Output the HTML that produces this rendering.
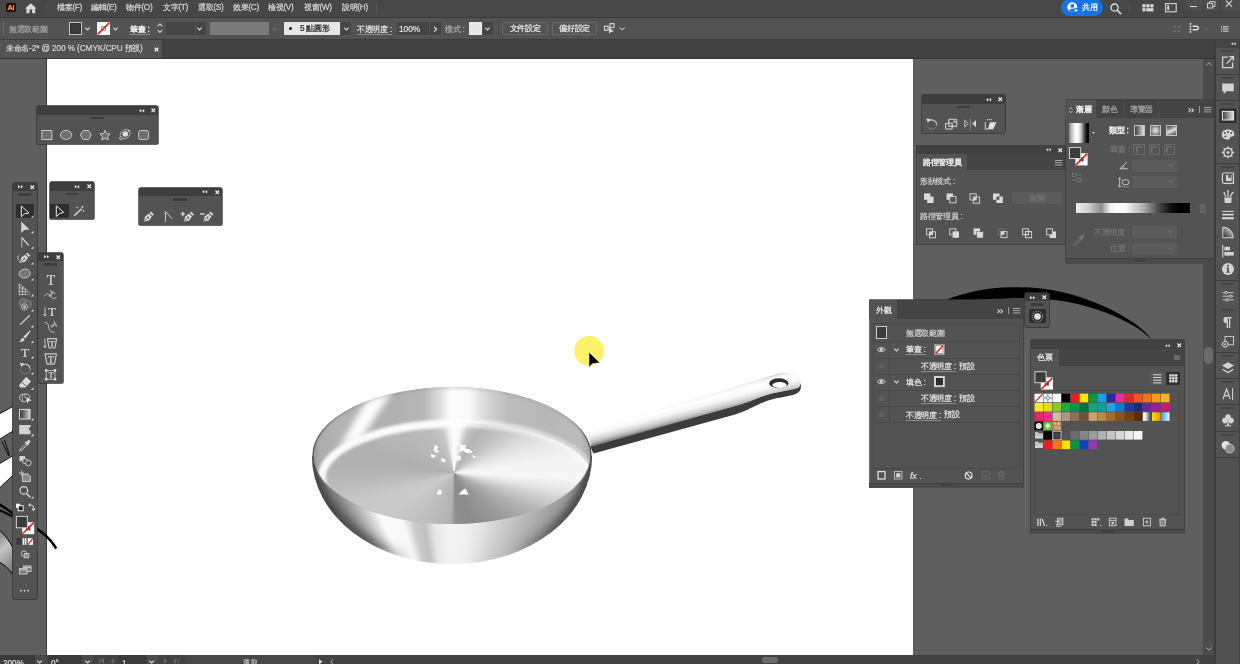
<!DOCTYPE html>
<html lang="zh-Hant"><head><meta charset="utf-8"><title>Adobe Illustrator</title>
<style>
html,body{margin:0;padding:0;}
body{width:1240px;height:664px;overflow:hidden;position:relative;background:#535353;font-family:"Liberation Sans",sans-serif;}
#root{position:absolute;left:0;top:0;width:1240px;height:664px;overflow:hidden;filter:blur(0.32px);}
.a{position:absolute;display:block;}
.t{white-space:nowrap;-webkit-text-stroke:0.22px currentColor;will-change:transform;}
.l{font-size:1.07em;letter-spacing:-0.28px;}
.c{display:inline-block;width:1em;text-align:center;}
svg{overflow:visible;}
</style></head><body><div id="root">
<!-- p_canvas -->
<div class="a" style="left:0px;top:58.4px;width:1203px;height:596.4px;background:#5f5f5f;"></div>
<div class="a" style="left:47.4px;top:58.4px;width:866px;height:596.4px;background:#ffffff;"></div>
<div class="a" style="left:45.6px;top:58.4px;width:1.9px;height:596.4px;background:#3c3c3c;"></div>
<div class="a" style="left:1202.6px;top:58.4px;width:13px;height:596.4px;background:#4c4c4c;"></div>
<svg class="a" style="left:1206px;top:62.4px;" width="6" height="4" viewBox="0 0 6 4"><path d="M0.4 3.2 L3 0.7 L5.6 3.2" fill="none" stroke="#b4b4b4" stroke-width="1"/></svg>
<svg class="a" style="left:1206px;top:647px;" width="6" height="4" viewBox="0 0 6 4"><path d="M0.4 0.7 L3 3.2 L5.6 0.7" fill="none" stroke="#b4b4b4" stroke-width="1"/></svg>
<div class="a" style="left:1204.2px;top:347.4px;width:8.8px;height:16.2px;background:#6b6b6b;border-radius:4.4px;"></div>
<div class="a" style="left:0px;top:654.6px;width:1216px;height:9.4px;background:#424242;"></div>
<!-- p_pan -->
<svg class="a" style="left:0px;top:0px;" width="1240" height="664" viewBox="0 0 1240 664"><path d="M946 300 C962 293 985 288.5 1003 287.6 C1026 286.4 1046 288 1064 292.6 C1092 299.6 1116 311 1134 323 C1143 329.4 1148.6 335 1152 340.5 C1146 334 1140 329.6 1133 325.6 C1117 316 1096 308 1072 302.8 C1052 298.8 1030 298 1008 298.4 C990 298.8 976 299.6 968 300.2 Z" fill="#000"/></svg>
<svg class="a" style="left:0px;top:0px;" width="1240" height="664" viewBox="0 0 1240 664"><defs>
<linearGradient id="gBowl" gradientUnits="userSpaceOnUse" x1="312" y1="0" x2="592" y2="0">
<stop offset="0" stop-color="#5a5a5a"/><stop offset="0.03" stop-color="#747474"/><stop offset="0.09" stop-color="#9a9a9a"/><stop offset="0.16" stop-color="#cdcdcd"/>
<stop offset="0.215" stop-color="#f6f6f6"/><stop offset="0.29" stop-color="#f2f2f2"/><stop offset="0.34" stop-color="#c9c9c9"/><stop offset="0.40" stop-color="#b6b6b6"/>
<stop offset="0.45" stop-color="#cfcfcf"/><stop offset="0.50" stop-color="#f0f0f0"/><stop offset="0.585" stop-color="#f2f2f2"/><stop offset="0.66" stop-color="#dadada"/>
<stop offset="0.75" stop-color="#bebebe"/><stop offset="0.84" stop-color="#a2a2a2"/><stop offset="0.92" stop-color="#858585"/><stop offset="0.975" stop-color="#666"/><stop offset="1" stop-color="#4c4c4c"/>
</linearGradient>
<linearGradient id="gWall" gradientUnits="userSpaceOnUse" x1="312" y1="0" x2="592" y2="0">
<stop offset="0" stop-color="#c2c2c2"/><stop offset="0.05" stop-color="#d6d6d6"/><stop offset="0.085" stop-color="#b0b0b0"/><stop offset="0.125" stop-color="#a6a6a6"/>
<stop offset="0.165" stop-color="#c8c8c8"/><stop offset="0.205" stop-color="#fbfbfb"/><stop offset="0.245" stop-color="#f4f4f4"/><stop offset="0.285" stop-color="#bcbcbc"/>
<stop offset="0.36" stop-color="#adadad"/><stop offset="0.45" stop-color="#b6b6b6"/><stop offset="0.485" stop-color="#e6e6e6"/><stop offset="0.505" stop-color="#ffffff"/>
<stop offset="0.535" stop-color="#f4f4f4"/><stop offset="0.57" stop-color="#c0c0c0"/><stop offset="0.68" stop-color="#bcbcbc"/><stop offset="0.8" stop-color="#c8c8c8"/>
<stop offset="0.92" stop-color="#d8d8d8"/><stop offset="1" stop-color="#dedede"/>
</linearGradient>
<linearGradient id="gHandle" gradientUnits="userSpaceOnUse" x1="686" y1="398" x2="691.4" y2="418.4">
<stop offset="0" stop-color="#b8b8b8"/><stop offset="0.1" stop-color="#f2f2f2"/><stop offset="0.3" stop-color="#ffffff"/><stop offset="0.55" stop-color="#f6f6f6"/>
<stop offset="0.8" stop-color="#d2d2d2"/><stop offset="0.95" stop-color="#a8a8a8"/><stop offset="1" stop-color="#8a8a8a"/>
</linearGradient>
<linearGradient id="gRimL" gradientUnits="userSpaceOnUse" x1="312" y1="0" x2="592" y2="0">
<stop offset="0" stop-color="#4a4a4a" stop-opacity="0.85"/><stop offset="0.12" stop-color="#6a6a6a" stop-opacity="0.35"/><stop offset="0.3" stop-color="#fff" stop-opacity="0"/>
<stop offset="0.8" stop-color="#fff" stop-opacity="0"/><stop offset="0.93" stop-color="#6a6a6a" stop-opacity="0.35"/><stop offset="1" stop-color="#3c3c3c" stop-opacity="0.9"/>
</linearGradient>
<clipPath id="cRim"><ellipse cx="452" cy="455.6" rx="139.4" ry="68.6"/></clipPath>
</defs><path d="M590 446 L738 405 C752 401 758 397.4 768 394.6 C780 391.2 792 390.4 798.6 387.6 C800.4 385.4 800.8 383.4 800.6 382 L801 386.6 C801 390.4 799 392.8 795.2 394.2 C786 397.2 776 397.6 768 400.6 C756 404.8 748 410.6 736 414.2 L593.4 453.6 Z" fill="#3c3c3c"/><path d="M583.6 431.4 L779.6 373.6 C786 371.8 794 372.6 798 376 C801.6 379.2 801.6 384.4 798.2 387.2 C793 390.2 780 391.2 768 394.6 C757 397.8 751.6 401.6 740 404.8 L591.6 446.6 C590.6 441.6 587.6 435.6 583.6 431.4 Z" fill="url(#gHandle)"/><ellipse cx="778.8" cy="383.2" rx="9.6" ry="5" fill="#303030"/><ellipse cx="779.6" cy="385" rx="7.2" ry="3" fill="#ffffff"/></svg>
<div class="a" style="left:312.4px;top:456px;width:279.2px;height:108.4px;overflow:hidden;border-radius:0 0 139.6px 139.6px / 0 0 108.4px 108.4px;"><div class="a" style="left:0;top:0;width:279.2px;height:108.4px;background:conic-gradient(from -45deg at 137.6px 216px,#474747 0deg,#5a5a5a 7deg,#828282 12deg,#c0c0c0 16.6deg,#fafafa 20.9deg,#f8f8f8 27.8deg,#cbcbcb 31.4deg,#c0c0c0 35.2deg,#e6e6e6 39.1deg,#f4f4f4 45deg,#f0f0f0 52deg,#e2e2e2 58deg,#cfcfcf 64deg,#b4b4b4 72.3deg,#989898 79.6deg,#727272 84.6deg,#505050 87.4deg,#444 90deg,#444 360deg);"></div><svg class="a" style="left:0;top:0" width="279.2" height="108.4" viewBox="312.4 456 279.2 108.4"><defs><filter id="fBe" x="-10%%" y="-20%%" width="120%%" height="140%%"><feGaussianBlur stdDeviation="4"/></filter><linearGradient id="gBe" gradientUnits="userSpaceOnUse" x1="312" y1="0" x2="592" y2="0"><stop offset="0" stop-color="#3c3c3c" stop-opacity="0.95"/><stop offset="0.2" stop-color="#444" stop-opacity="0.75"/><stop offset="0.36" stop-color="#555" stop-opacity="0"/><stop offset="0.72" stop-color="#555" stop-opacity="0"/><stop offset="0.86" stop-color="#444" stop-opacity="0.7"/><stop offset="1" stop-color="#333" stop-opacity="0.95"/></linearGradient></defs><path d="M310 436 L312.4 456 A139.6 108.4 0 0 0 591.6 456 L594 436" fill="none" stroke="url(#gBe)" stroke-width="12" filter="url(#fBe)"/></svg></div>
<div class="a" style="left:312.6px;top:387px;width:278.8px;height:137.2px;background:#c0c0c0;border-radius:50%;overflow:hidden;"><div class="a" style="left:-18.6px;top:16.8px;width:320px;height:320px;background:conic-gradient(from 0deg,#fdfdfd 0deg,#f4f4f4 3.5deg,#c2c2c2 8deg,#b4b4b4 14deg,#c2c2c2 26deg,#d8d8d8 40deg,#e9e9e9 56deg,#f4f4f4 74deg,#f6f6f6 96deg,#e6e6e6 110deg,#cacaca 125deg,#b0b0b0 140deg,#989898 158deg,#8b8b8b 172deg,#8e8e8e 179deg,#b4b4b4 182deg,#bebebe 195deg,#cacaca 215deg,#c8c8c8 235deg,#bcbcbc 255deg,#b2b2b2 275deg,#b0b0b0 300deg,#b6b6b6 325deg,#bababa 345deg,#c6c6c6 353deg,#f2f2f2 357.5deg,#fdfdfd 360deg);transform-origin:0 0;transform:scaleY(0.4300);"></div></div>
<svg class="a" style="left:0px;top:0px;" width="1240" height="664" viewBox="0 0 1240 664"><defs><mask id="mWall" maskUnits="userSpaceOnUse" x="300" y="380" width="300" height="150"><rect x="300" y="380" width="300" height="150" fill="#fff"/><ellipse cx="457" cy="477.4" rx="135" ry="54.4" fill="#000"/></mask><filter id="fB2" x="-20%" y="-20%" width="140%" height="140%"><feGaussianBlur stdDeviation="1.6"/></filter><filter id="fB3" x="-30%" y="-30%" width="160%" height="160%"><feGaussianBlur stdDeviation="3"/></filter><linearGradient id="gWall2" gradientUnits="userSpaceOnUse" x1="312" y1="0" x2="592" y2="0"><stop offset="0" stop-color="#989898"/><stop offset="0.03" stop-color="#acacac"/><stop offset="0.1" stop-color="#b4b4b4"/><stop offset="0.3" stop-color="#b0b0b0"/><stop offset="0.4" stop-color="#b8b8b8"/><stop offset="0.455" stop-color="#dcdcdc"/><stop offset="0.495" stop-color="#fcfcfc"/><stop offset="0.56" stop-color="#fafafa"/><stop offset="0.62" stop-color="#d8d8d8"/><stop offset="0.7" stop-color="#bcbcbc"/><stop offset="0.85" stop-color="#b8b8b8"/><stop offset="0.96" stop-color="#bcbcbc"/><stop offset="1" stop-color="#a0a0a0"/></linearGradient><linearGradient id="gBand" gradientUnits="userSpaceOnUse" x1="318" y1="0" x2="592" y2="0"><stop offset="0" stop-color="#fff" stop-opacity="0.95"/><stop offset="0.45" stop-color="#fff" stop-opacity="0.95"/><stop offset="0.62" stop-color="#fff" stop-opacity="0.6"/><stop offset="1" stop-color="#fff" stop-opacity="0.4"/></linearGradient><linearGradient id="gWallV" gradientUnits="userSpaceOnUse" x1="0" y1="387" x2="0" y2="420"><stop offset="0" stop-color="#808080" stop-opacity="0.45"/><stop offset="0.12" stop-color="#909090" stop-opacity="0.12"/><stop offset="0.3" stop-color="#909090" stop-opacity="0"/></linearGradient></defs><g mask="url(#mWall)"><g clip-path="url(#cRim)"><ellipse cx="452" cy="455.6" rx="139.4" ry="68.6" fill="url(#gWall2)"/><path d="M372 390 L392 392 L360 440 L340 446 Z" fill="#ffffff" opacity="0.97" filter="url(#fB3)"/><ellipse cx="452" cy="455.6" rx="139" ry="68.2" fill="none" stroke="#8c8c8c" stroke-width="1.6" opacity="0.5" filter="url(#fB2)"/></g></g></svg>
<svg class="a" style="left:0px;top:0px;" width="1240" height="664" viewBox="0 0 1240 664"><defs><linearGradient id="gArc" gradientUnits="userSpaceOnUse" x1="320" y1="0" x2="590" y2="0"><stop offset="0" stop-color="#fff" stop-opacity="0.1"/><stop offset="0.08" stop-color="#fff" stop-opacity="0.75"/><stop offset="0.3" stop-color="#fff" stop-opacity="0.8"/><stop offset="0.5" stop-color="#fff" stop-opacity="0.75"/><stop offset="0.7" stop-color="#fff" stop-opacity="0.35"/><stop offset="1" stop-color="#fff" stop-opacity="0.1"/></linearGradient></defs><g clip-path="url(#cRim)"><ellipse cx="457" cy="478" rx="135.4" ry="54.6" fill="none" stroke="url(#gBand)" stroke-width="8" filter="url(#fB2)"/></g><ellipse cx="452" cy="455.6" rx="139" ry="68.2" fill="none" stroke="url(#gRimL)" stroke-width="1.3"/><g fill="#fff"><path d="M435 444.6 L438.6 447 L437 449.6 L439.4 452 L436 453 L433.4 450 Z"/><path d="M431 454 L436 455.6 L434 458 L430.6 456.6Z"/><path d="M441.6 458 L446 460 L444.6 462.6 L441 461Z"/><path d="M458.4 443 L462.6 445.6 L466 444.4 L465 448.4 L470 449.4 L472.6 452.8 L466.6 453 L462.8 450.6 L458.6 452.4 L460.6 447.6Z"/><path d="M456 456 L460.4 455.4 L461 459.6 L457 461Z"/><path d="M471.6 455 L476 456.6 L474.4 458.4Z"/><path d="M438.6 490 L441.4 490 L441.6 494.4 L436.6 494.4Z"/><path d="M462 490.4 L465.4 488.6 L468.6 494.4 L458.6 494.4Z"/></g></svg>
<div class="a" style="left:573.6px;top:335.8px;width:30px;height:30px;background:radial-gradient(circle,#fbf168 0%,#fbf26c 80%,rgba(251,243,130,0.55) 92%,rgba(252,246,160,0) 100%);border-radius:50%;"></div>
<svg class="a" style="left:587px;top:350px;" width="16" height="20" viewBox="0 0 16 20"><path d="M1.9 2 L1.9 17.3 L5.6 13.7 L13 12.8 Z" fill="#0a0a0a" stroke="#fff" stroke-width="0.6" stroke-linejoin="round"/></svg>
<!-- p_left -->
<svg class="a" style="left:0px;top:0px;" width="60" height="664" viewBox="0 0 60 664"><defs><linearGradient id="gL1" x1="0" y1="0" x2="0.3" y2="1"><stop offset="0" stop-color="#787878"/><stop offset="0.5" stop-color="#c4c4c4"/><stop offset="1" stop-color="#868686"/></linearGradient></defs><path d="M-2 414.6 L13 406.4 L13 431 L-2 440.2 Z" fill="#fff" stroke="#000" stroke-width="0.9"/><path d="M1.6 441 L8.8 456 M4.4 440 L9.6 455.2" stroke="#000" stroke-width="0.9" fill="none"/><path d="M-2 464.6 L13 455.6 L13 475.2 L-2 489.4 Z" fill="#fff" stroke="#000" stroke-width="0.9"/><path d="M-2 503.6 C6 508 12 513 20 518.4 C30 525 42 530 50 540 C53 543.6 54.6 545.6 55.6 547.6" stroke="#000" stroke-width="2.6" fill="none" stroke-linecap="round"/><path d="M-2 509.6 C4 512 9 514.6 14 517.4" stroke="#000" stroke-width="2" fill="none"/><path d="M-2 529 C3 533 9 540 13 548 L13 574.6 C9 569 4 564 -2 561.6 Z" fill="url(#gL1)" stroke="#000" stroke-width="1"/></svg>
<div class="a" style="left:36.7px;top:106.4px;width:121.6px;height:37.6px;background:#535353;border-radius:2px 2px 1px 1px;box-shadow:0 0 0 0.7px #333;"></div>
<div class="a" style="left:36.7px;top:106.4px;width:121.6px;height:8.4px;background:#3e3e3e;border-radius:2px 2px 0 0;"></div>
<svg class="a" style="left:139.2px;top:109px;" width="5" height="3.4" viewBox="0 0 5 3.4"><path d="M2.3 0 L0 1.7 L2.3 3.4Z M5.2 0 L2.9 1.7 L5.2 3.4Z" fill="#e2e2e2"/></svg>
<svg class="a" style="left:151.1px;top:108.4px;" width="4.6" height="4.6" viewBox="0 0 4.6 4.6"><path d="M0.5 0.5 L4.1 4.1 M4.1 0.5 L0.5 4.1" stroke="#f0f0f0" stroke-width="1.2"/></svg>
<div class="a" style="left:91px;top:117px;width:13px;height:2.3px;background:#3d3d3d;border-radius:0.6px;"></div>
<svg class="a" style="left:0px;top:0px;" width="200" height="200" viewBox="0 0 200 200"><rect x="41.8" y="130.5" width="10" height="9" fill="#707070" stroke="#c6c6c6" stroke-width="1"/><ellipse cx="66.1" cy="135" rx="5.7" ry="4.5" fill="#707070" stroke="#c6c6c6" stroke-width="1"/><path d="M80.4 135 L83.2 130.5 L88.6 130.5 L91.2 135 L88.6 139.5 L83.2 139.5 Z" fill="#707070" stroke="#c6c6c6" stroke-width="1"/><path d="M105 130.3 L106.5 133.6 L110.2 134 L107.5 136.4 L108.3 140 L105 138.2 L101.7 140 L102.5 136.4 L99.8 134 L103.5 133.6 Z" fill="#707070" stroke="#c6c6c6" stroke-width="1" stroke-linejoin="round"/><ellipse cx="125.2" cy="134.2" rx="5.4" ry="4.2" transform="rotate(-35 125.2 134.2)" fill="none" stroke="#bdbdbd" stroke-width="0.8"/><circle cx="125.3" cy="134" r="2.8" fill="#dcdcdc"/><circle cx="121" cy="138.2" r="1.5" fill="#535353" stroke="#d0d0d0" stroke-width="0.8"/><circle cx="128.6" cy="130.6" r="0.9" fill="#e0e0e0"/><rect x="138.6" y="130.5" width="10" height="9" rx="2" fill="#707070" stroke="#c6c6c6" stroke-width="1"/></svg>
<div class="a" style="left:49.9px;top:182.3px;width:44.1px;height:37.2px;background:#535353;border-radius:2px 2px 1px 1px;box-shadow:0 0 0 0.7px #333;"></div>
<div class="a" style="left:49.9px;top:182.3px;width:44.1px;height:8.4px;background:#3e3e3e;border-radius:2px 2px 0 0;"></div>
<svg class="a" style="left:74.4px;top:184.9px;" width="5" height="3.4" viewBox="0 0 5 3.4"><path d="M2.3 0 L0 1.7 L2.3 3.4Z M5.2 0 L2.9 1.7 L5.2 3.4Z" fill="#e2e2e2"/></svg>
<svg class="a" style="left:86.6px;top:184.3px;" width="4.6" height="4.6" viewBox="0 0 4.6 4.6"><path d="M0.5 0.5 L4.1 4.1 M4.1 0.5 L0.5 4.1" stroke="#f0f0f0" stroke-width="1.2"/></svg>
<div class="a" style="left:65.6px;top:192.9px;width:12.4px;height:2.3px;background:#3d3d3d;border-radius:0.6px;"></div>
<div class="a" style="left:49.5px;top:203.7px;width:19.5px;height:14px;background:#2e2e2e;border-radius:0 1px 1px 0;"></div>
<svg class="a" style="left:0px;top:0px;" width="200" height="300" viewBox="0 0 200 300"><path d="M56.3 205.8 L56.3 216.6 L59.4 213.6 L63.8 212.4 Z" fill="none" stroke="#e6e6e6" stroke-width="1" stroke-linejoin="miter"/><path d="M74.2 215.8 L81.6 208.8" stroke="#e0e0e0" stroke-width="1.3"/><g fill="#e0e0e0"><path d="M77.1 206.4 L77.5 207.3 L78.4 207.6 L77.5 207.9 L77.1 208.8 L76.7 207.9 L75.8 207.6 L76.7 207.3Z"/><path d="M82.4 205.4 L82.9 206.5 L84 206.9 L82.9 207.3 L82.4 208.4 L81.9 207.3 L80.8 206.9 L81.9 206.5Z"/><path d="M83.4 209.7 L83.8 210.6 L84.7 210.9 L83.8 211.2 L83.4 212.1 L83 211.2 L82.1 210.9 L83 210.6Z"/></g></svg>
<div class="a" style="left:138.9px;top:187.8px;width:83px;height:37.5px;background:#535353;border-radius:2px 2px 1px 1px;box-shadow:0 0 0 0.7px #333;"></div>
<div class="a" style="left:138.9px;top:187.8px;width:83px;height:8.4px;background:#3e3e3e;border-radius:2px 2px 0 0;"></div>
<svg class="a" style="left:202.4px;top:190.4px;" width="5" height="3.4" viewBox="0 0 5 3.4"><path d="M2.3 0 L0 1.7 L2.3 3.4Z M5.2 0 L2.9 1.7 L5.2 3.4Z" fill="#e2e2e2"/></svg>
<svg class="a" style="left:214.6px;top:189.8px;" width="4.6" height="4.6" viewBox="0 0 4.6 4.6"><path d="M0.5 0.5 L4.1 4.1 M4.1 0.5 L0.5 4.1" stroke="#f0f0f0" stroke-width="1.2"/></svg>
<div class="a" style="left:173px;top:198.4px;width:14px;height:2.3px;background:#3d3d3d;border-radius:0.6px;"></div>
<svg class="a" style="left:0px;top:0px;" width="300" height="300" viewBox="0 0 300 300"><g transform="translate(143.5 211.4) scale(1)"><path d="M0.3 10.3 L1.6 5 L5.4 2.2 L8.4 5.2 L5.6 9 Z" fill="#d8d8d8"/><path d="M6.2 1.5 L7.6 0.2 L10.4 3 L9.1 4.4 Z" fill="#d8d8d8"/><path d="M0.6 10 L4.2 6.4" stroke="#535353" stroke-width="0.8"/><circle cx="4.6" cy="6" r="0.9" fill="#535353"/></g><path d="M165.4 221.8 L165.4 211.6 L172.4 219" fill="none" stroke="#cfcfcf" stroke-width="1"/><g transform="translate(183.6 211.4) scale(1)"><path d="M0.3 10.3 L1.6 5 L5.4 2.2 L8.4 5.2 L5.6 9 Z" fill="#d8d8d8"/><path d="M6.2 1.5 L7.6 0.2 L10.4 3 L9.1 4.4 Z" fill="#d8d8d8"/><path d="M0.6 10 L4.2 6.4" stroke="#535353" stroke-width="0.8"/><circle cx="4.6" cy="6" r="0.9" fill="#535353"/></g><path d="M180.6 214 H185 M182.8 211.8 V216.2" stroke="#e8e8e8" stroke-width="1.2"/><g transform="translate(203 211.4) scale(1)"><path d="M0.3 10.3 L1.6 5 L5.4 2.2 L8.4 5.2 L5.6 9 Z" fill="#d8d8d8"/><path d="M6.2 1.5 L7.6 0.2 L10.4 3 L9.1 4.4 Z" fill="#d8d8d8"/><path d="M0.6 10 L4.2 6.4" stroke="#535353" stroke-width="0.8"/><circle cx="4.6" cy="6" r="0.9" fill="#535353"/></g><path d="M200 214 H204.6" stroke="#e8e8e8" stroke-width="1.2"/></svg>
<div class="a" style="left:12.6px;top:182.7px;width:24.6px;height:416.8px;background:#535353;border-radius:2px 2px 1px 1px;box-shadow:0 0 0 0.7px #333;"></div>
<div class="a" style="left:12.6px;top:182.7px;width:24.6px;height:8.4px;background:#3e3e3e;border-radius:2px 2px 0 0;"></div>
<svg class="a" style="left:18px;top:185.3px;" width="5" height="3.4" viewBox="0 0 5 3.4"><path d="M0 0 L2.3 1.7 L0 3.4Z M2.9 0 L5.2 1.7 L2.9 3.4Z" fill="#e2e2e2"/></svg>
<svg class="a" style="left:29.8px;top:184.7px;" width="4.6" height="4.6" viewBox="0 0 4.6 4.6"><path d="M0.5 0.5 L4.1 4.1 M4.1 0.5 L0.5 4.1" stroke="#f0f0f0" stroke-width="1.2"/></svg>
<div class="a" style="left:17.6px;top:193.3px;width:13.4px;height:2.3px;background:#3d3d3d;border-radius:0.6px;"></div>
<div class="a" style="left:16px;top:204.1px;width:17.7px;height:13.9px;background:#2e2e2e;border-radius:1px;"></div>
<div class="a t" style="left:18.8px;top:345.6px;height:14px;line-height:14px;font-size:12.8px;color:#dcdcdc;width:12px;text-align:center;font-family:'Liberation Serif',serif;">T</div>
<svg class="a" style="left:0px;top:0px;" width="60" height="620" viewBox="0 0 60 620"><path d="M21.3 206 L21.3 216.8 L24.4 213.8 L29 213 Z" fill="none" stroke="#e8e8e8" stroke-width="1"/><path d="M33.4 215.2 L33.4 217.6 L31 217.6 Z" fill="#efefef"/><path d="M21.2 221.6 L21.2 233 L24.2 230 L29.6 229.6 Z" fill="#d4d4d4"/><path d="M33.4 230.8 L33.4 233.2 L31 233.2 Z" fill="#efefef"/><path d="M21.8 247.6 L21.8 237.6" fill="none" stroke="#a8a8a8" stroke-width="1.2"/><path d="M21.6 237.4 L28.8 245.4" fill="none" stroke="#dcdcdc" stroke-width="1.3"/><path d="M33.4 246.4 L33.4 248.8 L31 248.8 Z" fill="#efefef"/><g transform="translate(19.8 252.6) scale(1)"><path d="M0.3 10.3 L1.6 5 L5.4 2.2 L8.4 5.2 L5.6 9 Z" fill="#d8d8d8"/><path d="M6.2 1.5 L7.6 0.2 L10.4 3 L9.1 4.4 Z" fill="#d8d8d8"/><path d="M0.6 10 L4.2 6.4" stroke="#535353" stroke-width="0.8"/><circle cx="4.6" cy="6" r="0.9" fill="#535353"/></g><path d="M19.4 255.4 C17.2 256.4 17.4 259 18.8 259.8 C20 260.6 20.4 262 19 262.8" fill="none" stroke="#d0d0d0" stroke-width="0.9"/><path d="M33.4 262.2 L33.4 264.6 L31 264.6 Z" fill="#efefef"/><ellipse cx="24.7" cy="273.6" rx="5.6" ry="4.5" transform="rotate(-8 24.7 273.6)" fill="#767676" stroke="#c4c4c4" stroke-width="0.9"/><path d="M33.4 278.2 L33.4 280.6 L31 280.6 Z" fill="#efefef"/><defs><linearGradient id="gPg" x1="0" y1="0" x2="1" y2="0"><stop offset="0" stop-color="#d8d8d8"/><stop offset="0.55" stop-color="#c0c0c0"/><stop offset="1" stop-color="#7c7c7c"/></linearGradient></defs><path d="M19.2 283.8 L19.2 294.6 L30 294.6 L30 292.8 L24.4 288 Z M19.2 287.4 L26.4 289.8 M19.2 291 L29.4 292.4 M22.6 286.6 L22.6 294.6 M25.6 289.2 L25.6 294.6" fill="none" stroke="url(#gPg)" stroke-width="0.85"/><path d="M33.4 294 L33.4 296.4 L31 296.4 Z" fill="#efefef"/><circle cx="23.2" cy="302.6" r="3.8" fill="#686868" stroke="#8e8e8e" stroke-width="0.8"/><circle cx="27.8" cy="304" r="3.6" fill="#606060" stroke="#8e8e8e" stroke-width="0.8"/><circle cx="24.4" cy="307" r="3.2" fill="#707070" stroke="#b4b4b4" stroke-width="0.8"/><path d="M24.4 305.4 V308.6 M22.8 307 H26" stroke="#d8d8d8" stroke-width="0.8"/><path d="M33.4 309.2 L33.4 311.6 L31 311.6 Z" fill="#efefef"/><path d="M20.2 324.6 L29.8 315.2" stroke="#d8d8d8" stroke-width="1.2"/><path d="M33.4 325 L33.4 327.4 L31 327.4 Z" fill="#efefef"/><path d="M29.8 330.4 L30.6 331.2 L25.4 338.6 L23.4 336.8 Z" fill="#d8d8d8"/><path d="M22.8 337.6 L24.6 339.4 C23.6 341.6 21.4 342.2 19.6 341.8 C20.8 340.8 21 339 22.8 337.6Z" fill="#d8d8d8"/><path d="M33.4 340.6 L33.4 343 L31 343 Z" fill="#efefef"/><path d="M33.4 356 L33.4 358.4 L31 358.4 Z" fill="#efefef"/><path d="M22.4 365.2 A5 5 0 0 1 30.2 369" fill="none" stroke="#cfcfcf" stroke-width="1.05"/><path d="M30.2 369 A5 5 0 0 1 20.4 370.2" fill="none" stroke="#9a9a9a" stroke-width="1" stroke-dasharray="1.6 0.9"/><path d="M19.8 362.8 L24 363.4 L21.6 367.2Z" fill="#d4d4d4"/><path d="M33.4 372.2 L33.4 374.6 L31 374.6 Z" fill="#efefef"/><path d="M26.2 376.8 L31 381.6 L25.4 387.6 L20.4 387.6 L18.8 385.6 Z" fill="#dadada"/><path d="M21.4 381.8 L26.8 386.6" stroke="#535353" stroke-width="0.9"/><path d="M33.4 387.4 L33.4 389.8 L31 389.8 Z" fill="#efefef"/><path d="M19.6 397 C19.6 393.4 29.6 392.6 29.8 396.4 C30 399 26 399.6 25.6 401.6 C23 402.6 19.4 400.4 19.6 397Z" fill="none" stroke="#d0d0d0" stroke-width="1"/><path d="M26.2 396.8 L31.6 400.6 L28.6 401 L27.4 404Z" fill="#e4e4e4"/><path d="M22.4 394.4 V401 M25 393.8 V398" stroke="#d0d0d0" stroke-width="0.7"/><defs><linearGradient id="gTG" x1="0" y1="0" x2="1" y2="0"><stop offset="0" stop-color="#2c2c2c"/><stop offset="1" stop-color="#cfcfcf"/></linearGradient></defs><rect x="19.6" y="409.4" width="10.4" height="9.6" fill="url(#gTG)" stroke="#dcdcdc" stroke-width="1"/><path d="M33.4 418 L33.4 420.4 L31 420.4 Z" fill="#efefef"/><path d="M19.2 425 L30.6 425 L30.6 427 C28.4 427.4 28.4 430.4 30.6 430.8 L30.6 434.2 L19.2 434.2 Z" fill="#d2d2d2"/><path d="M33.4 433.8 L33.4 436.2 L31 436.2 Z" fill="#efefef"/><path d="M28 440.2 C29.4 439.4 31 441 30 442.4 L28.2 444.2 L28.8 444.8 L27.8 445.8 L24.6 442.6 L25.6 441.6 L26.2 442.2 Z" fill="#d8d8d8"/><path d="M25.6 444 L20.6 449 L19.8 451 L21.8 450.2 L26.8 445.2" fill="none" stroke="#d8d8d8" stroke-width="0.9"/><rect x="19.4" y="456" width="5.6" height="5.2" fill="#d0d0d0"/><circle cx="25.2" cy="461.2" r="2.6" fill="#535353" stroke="#d0d0d0" stroke-width="0.9"/><circle cx="28.4" cy="463" r="2.8" fill="#535353" stroke="#d0d0d0" stroke-width="0.9"/><path d="M21.6 470.4 V475.6 M19 473 H24.2" stroke="#d4d4d4" stroke-width="0.9"/><path d="M22.4 474 H28 L30.4 476.4 V481.6 H22.4 Z" fill="#8a8a8a" stroke="#d4d4d4" stroke-width="0.9"/><circle cx="23.8" cy="490.4" r="3.8" fill="none" stroke="#d8d8d8" stroke-width="1.2"/><path d="M26.6 493.4 L30.2 497.2" stroke="#d8d8d8" stroke-width="1.5"/><path d="M33.4 496.2 L33.4 498.6 L31 498.6 Z" fill="#efefef"/><rect x="15.8" y="503.2" width="5" height="5" fill="#fff" stroke="#222" stroke-width="0.5"/><rect x="18.2" y="505.8" width="5" height="5" fill="#222" stroke="#fff" stroke-width="0.9"/><path d="M29.6 505 C32.6 504.6 33.8 506.4 33.6 509" fill="none" stroke="#d8d8d8" stroke-width="1"/><path d="M28 505 L30.4 503 L30.4 507Z M33.6 511.4 L31.6 508.6 L35.4 508.6Z" fill="#d8d8d8"/><rect x="22.2" y="522.2" width="12" height="12" fill="#fff"/><rect x="26" y="526" width="4.4" height="4.4" fill="#535353"/><path d="M22.6 533.8 L33.8 522.6" stroke="#e01818" stroke-width="1.5"/><rect x="16.4" y="516.4" width="11" height="11.4" fill="#3a3a3a" stroke="#cdcdcd" stroke-width="1"/><rect x="16.4" y="538.2" width="5" height="6.6" fill="#3a3a3a"/><rect x="22" y="538.2" width="5" height="6.6" fill="#8a8a8a"/><rect x="23" y="538.2" width="1.1" height="6.6" fill="#f4f4f4"/><rect x="25" y="538.2" width="1.1" height="6.6" fill="#f4f4f4"/><rect x="27.8" y="538.2" width="5.2" height="6.6" fill="#fff"/><path d="M28 544.6 L32.8 538.4" stroke="#e01818" stroke-width="1.2"/><circle cx="24" cy="553.6" r="2.7" fill="none" stroke="#cfcfcf" stroke-width="0.9"/><rect x="24.2" y="553.6" width="4.6" height="4.2" fill="#8c8c8c" stroke="#d4d4d4" stroke-width="0.8"/><rect x="23.4" y="566" width="7.6" height="5.4" fill="#7a7a7a" stroke="#d0d0d0" stroke-width="0.9"/><rect x="19.4" y="568.6" width="7.6" height="5.4" fill="#7a7a7a" stroke="#d0d0d0" stroke-width="0.9"/><path d="M19.4 570 H27 M23.4 567.4 H31" stroke="#d0d0d0" stroke-width="0.9"/><circle cx="21" cy="590.6" r="0.95" fill="#d8d8d8"/><circle cx="24.6" cy="590.6" r="0.95" fill="#d8d8d8"/><circle cx="28.2" cy="590.6" r="0.95" fill="#d8d8d8"/></svg>
<div class="a" style="left:38.3px;top:252.7px;width:24.5px;height:129.9px;background:#535353;border-radius:2px 2px 1px 1px;box-shadow:0 0 0 0.7px #333;"></div>
<div class="a" style="left:38.3px;top:252.7px;width:24.5px;height:8.4px;background:#3e3e3e;border-radius:2px 2px 0 0;"></div>
<svg class="a" style="left:43.8px;top:255.3px;" width="5" height="3.4" viewBox="0 0 5 3.4"><path d="M0 0 L2.3 1.7 L0 3.4Z M2.9 0 L5.2 1.7 L2.9 3.4Z" fill="#e2e2e2"/></svg>
<svg class="a" style="left:55.8px;top:254.7px;" width="4.6" height="4.6" viewBox="0 0 4.6 4.6"><path d="M0.5 0.5 L4.1 4.1 M4.1 0.5 L0.5 4.1" stroke="#f0f0f0" stroke-width="1.2"/></svg>
<div class="a" style="left:43.8px;top:263.3px;width:13px;height:2.3px;background:#3d3d3d;border-radius:0.6px;"></div>
<div class="a t" style="left:44.5px;top:273.8px;height:14px;line-height:14px;font-size:13.6px;color:#dcdcdc;width:12px;text-align:center;font-family:'Liberation Serif',serif;">T</div>
<div class="a t" style="left:46.5px;top:290.1px;height:9px;line-height:9px;font-size:9px;color:#dcdcdc;width:8px;text-align:center;font-family:'Liberation Serif',serif;transform:rotate(32deg);">T</div>
<div class="a t" style="left:46.6px;top:306.2px;height:12px;line-height:12px;font-size:12px;color:#dcdcdc;width:10px;text-align:center;font-family:'Liberation Serif',serif;">T</div>
<div class="a t" style="left:48.6px;top:321.1px;height:9px;line-height:9px;font-size:9px;color:#dcdcdc;width:8px;text-align:center;font-family:'Liberation Serif',serif;transform:rotate(58deg);">T</div>
<div class="a t" style="left:48px;top:339.5px;height:9px;line-height:9px;font-size:8.5px;color:#dcdcdc;width:8px;text-align:center;font-family:'Liberation Serif',serif;">T</div>
<div class="a t" style="left:46.7px;top:354.6px;height:10px;line-height:10px;font-size:9.5px;color:#dcdcdc;width:8px;text-align:center;font-family:'Liberation Serif',serif;">T</div>
<div class="a t" style="left:46.6px;top:370.9px;height:9px;line-height:9px;font-size:8.5px;color:#dcdcdc;width:8px;text-align:center;font-family:'Liberation Serif',serif;">T</div>
<svg class="a" style="left:0px;top:0px;" width="80" height="400" viewBox="0 0 80 400"><path d="M44.4 296.4 C46.4 292.6 48.6 293.4 50.4 296 C52 298.6 54.4 299.6 56.4 297" fill="none" stroke="#d0d0d0" stroke-width="0.9"/><path d="M45 307.4 V316 M43.6 314.2 L45 316.2 L46.4 314.2" fill="none" stroke="#d0d0d0" stroke-width="0.9"/><path d="M44.6 322.6 C47.6 322 48.4 325 48.6 327 C48.8 330 51 332.6 54.6 332" fill="none" stroke="#d0d0d0" stroke-width="0.9"/><path d="M45 338.6 V347.6 M43.6 345.8 L45 347.8 L46.4 345.8" fill="none" stroke="#d0d0d0" stroke-width="0.9"/><path d="M47.4 338.6 H56.6 L55 348 H49 Z" fill="none" stroke="#c8c8c8" stroke-width="1.2" stroke-linejoin="round"/><path d="M45 353.8 H56.4 L54.4 364.2 H47 Z" fill="none" stroke="#c8c8c8" stroke-width="1.2" stroke-linejoin="round"/><rect x="46.2" y="370.4" width="8.8" height="8.8" fill="none" stroke="#d0d0d0" stroke-width="0.8"/><g fill="#e0e0e0"><circle cx="46.2" cy="370.4" r="1.3"/><circle cx="55" cy="370.4" r="1.3"/><circle cx="46.2" cy="379.2" r="1.3"/><circle cx="55" cy="379.2" r="1.3"/></g></svg>
<!-- p_right -->
<div class="a" style="left:921.7px;top:95.4px;width:83.4px;height:37.9px;background:#535353;border-radius:2px 2px 1px 1px;box-shadow:0 0 0 0.7px #333;"></div>
<div class="a" style="left:921.7px;top:95.4px;width:83.4px;height:8.4px;background:#3e3e3e;border-radius:2px 2px 0 0;"></div>
<svg class="a" style="left:985.6px;top:98px;" width="5" height="3.4" viewBox="0 0 5 3.4"><path d="M2.3 0 L0 1.7 L2.3 3.4Z M5.2 0 L2.9 1.7 L5.2 3.4Z" fill="#e2e2e2"/></svg>
<svg class="a" style="left:997.6px;top:97.4px;" width="4.6" height="4.6" viewBox="0 0 4.6 4.6"><path d="M0.5 0.5 L4.1 4.1 M4.1 0.5 L0.5 4.1" stroke="#f0f0f0" stroke-width="1.2"/></svg>
<div class="a" style="left:956.6px;top:106px;width:13px;height:2.3px;background:#3d3d3d;border-radius:0.6px;"></div>
<svg class="a" style="left:0px;top:0px;" width="1240" height="200" viewBox="0 0 1240 200"><path d="M929 120.8 A5 5 0 0 1 936.8 124.6" fill="none" stroke="#d0d0d0" stroke-width="1.05"/><path d="M936.8 124.6 A5 5 0 0 1 927.4 126.4" fill="none" stroke="#9c9c9c" stroke-width="1" stroke-dasharray="1.7 0.9"/><path d="M926.2 118.4 L930.6 119 L928 122.8Z" fill="#d8d8d8"/><rect x="945.6" y="123.2" width="6.6" height="5.8" rx="0.8" fill="none" stroke="#cfcfcf" stroke-width="1.1"/><rect x="948.8" y="119.2" width="8" height="7.2" rx="0.8" fill="none" stroke="#cfcfcf" stroke-width="1.1"/><path d="M952 124 L955 121.2 M953 120.9 H955.3 V123.2" fill="none" stroke="#cfcfcf" stroke-width="0.8"/><path d="M964.8 120.2 L968.4 123.6 L964.8 127 Z" fill="none" stroke="#d4d4d4" stroke-width="0.9"/><path d="M970.6 118.6 V129.2" stroke="#a4a4a4" stroke-width="0.7"/><path d="M976 120 L972.2 123.6 L976 127.2 Z" fill="#d8d8d8"/><path d="M990 122.2 H996.4 L993.2 129.2 H987.8 Z" fill="#e0e0e0"/><path d="M985.3 122 V129.2 H988.4" fill="none" stroke="#d8d8d8" stroke-width="0.95"/><path d="M987 119.6 H992.4" stroke="#cfcfcf" stroke-width="1.1" stroke-dasharray="1.1 0.7"/></svg>
<div class="a" style="left:917.4px;top:145.6px;width:149.2px;height:98.8px;background:#535353;box-shadow:0 0 0 0.7px #383838;"></div>
<div class="a" style="left:917px;top:145.2px;width:150px;height:8.6px;background:#414141;"></div>
<div class="a" style="left:917px;top:153.8px;width:150px;height:16.6px;background:#444444;"></div>
<div class="a" style="left:917px;top:154.4px;width:50.2px;height:16px;background:#535353;"></div>
<svg class="a" style="left:1046px;top:148.1px;" width="5" height="3.4" viewBox="0 0 5 3.4"><path d="M2.2 0.2 L0 1.7 L2.2 3.2Z M4.8 0.2 L2.6 1.7 L4.8 3.2Z" fill="#dedede"/></svg>
<svg class="a" style="left:1058.2px;top:147.5px;" width="4.6" height="4.6" viewBox="0 0 4.6 4.6"><path d="M0.5 0.5 L4.1 4.1 M4.1 0.5 L0.5 4.1" stroke="#f0f0f0" stroke-width="1.2"/></svg>
<div class="a t" style="left:923.4px;top:156.6px;height:12px;line-height:12px;font-size:7.7px;color:#e6e6e6;-webkit-text-stroke:0.45px currentColor;"><span class="c">路</span><span class="c">徑</span><span class="c">管</span><span class="c">理</span><span class="c">員</span></div>
<svg class="a" style="left:1055px;top:159.5px;" width="7.4" height="5.4" viewBox="0 0 7.4 5.4"><path d="M0 0.5 H7.4 M0 2.7 H7.4 M0 4.9 H7.4" stroke="#c8c8c8" stroke-width="0.75"/></svg>
<div class="a t" style="left:920.4px;top:176.4px;height:12px;line-height:12px;font-size:7.7px;color:#cccccc;"><span class="c">形</span><span class="c">狀</span><span class="c">模</span><span class="c">式</span> <span class="l">:</span></div>
<div class="a t" style="left:920.4px;top:211.2px;height:12px;line-height:12px;font-size:7.7px;color:#cccccc;"><span class="c">路</span><span class="c">徑</span><span class="c">管</span><span class="c">理</span><span class="c">員</span> <span class="l">:</span></div>
<div class="a" style="left:1012.4px;top:192px;width:50px;height:12.4px;background:#5b5b5b;border-radius:1px;"></div>
<div class="a t" style="left:1012.4px;top:192.8px;height:12px;line-height:12px;font-size:7.7px;color:#737373;width:50px;text-align:center;"><span class="c">展</span><span class="c">開</span></div>
<svg class="a" style="left:0px;top:0px;" width="1240" height="300" viewBox="0 0 1240 300"><rect x="924" y="193.4" width="6.4" height="6.4" fill="#dadada"/><rect x="927.2" y="196.6" width="6.4" height="6.4" fill="#dadada"/><rect x="946.6" y="193.4" width="6.4" height="6.4" fill="#dadada"/><rect x="949.8" y="196.6" width="6.2" height="6.2" fill="#535353" stroke="#dadada" stroke-width="0.9"/><rect x="970" y="193.8" width="6.2" height="6.2" fill="none" stroke="#dadada" stroke-width="0.9"/><rect x="973.2" y="197" width="6.2" height="6.2" fill="none" stroke="#dadada" stroke-width="0.9"/><rect x="973.4" y="197.2" width="2.6" height="2.6" fill="#dadada"/><path d="M993 193.4 H999.4 V196.6 H1002.8 V203 H996.4 V199.8 H993 Z" fill="#dadada"/><rect x="996.4" y="196.6" width="3" height="3.2" fill="#535353"/><rect x="926.4" y="228.8" width="6" height="6" fill="none" stroke="#dadada" stroke-width="0.9"/><rect x="929.4" y="231.8" width="6" height="6" fill="none" stroke="#dadada" stroke-width="0.9"/><rect x="929.6" y="232" width="2.6" height="2.6" fill="#dadada"/><rect x="949.8" y="228.8" width="6" height="6" fill="none" stroke="#dadada" stroke-width="0.9"/><rect x="952.6" y="231.4" width="6.4" height="6.4" fill="#dadada"/><rect x="973.6" y="228.4" width="6.4" height="6.4" fill="#dadada"/><rect x="976.8" y="231.6" width="6.4" height="6.4" fill="#dadada" stroke="#535353" stroke-width="0.5"/><rect x="998.4" y="228.8" width="6" height="6" fill="none" stroke="#9a9a9a" stroke-width="0.7" stroke-dasharray="1 0.7"/><rect x="1001" y="231.6" width="6" height="6" fill="none" stroke="#dadada" stroke-width="0.9"/><rect x="1001.2" y="231.8" width="3" height="3" fill="#dadada"/><rect x="1022.6" y="228.8" width="6" height="6" fill="none" stroke="#dadada" stroke-width="0.9"/><rect x="1025.4" y="231.6" width="6.2" height="6.2" fill="none" stroke="#dadada" stroke-width="0.9"/><rect x="1025.4" y="231.6" width="3.2" height="3.2" fill="none" stroke="#dadada" stroke-width="0.8"/><rect x="1046.6" y="228.8" width="6" height="6" fill="none" stroke="#dadada" stroke-width="0.9"/><path d="M1049.6 235 H1052.8 V231.6 H1056 V238 H1049.6 Z" fill="#dadada"/></svg>
<div class="a" style="left:1065.8px;top:100px;width:148.8px;height:163px;background:#535353;box-shadow:0 0 0 0.7px #383838;"></div>
<div class="a" style="left:1065.4px;top:99.6px;width:149.6px;height:18.8px;background:#444444;"></div>
<div class="a" style="left:1065.4px;top:100.2px;width:30.8px;height:18.2px;background:#535353;"></div>
<div class="a" style="left:1065.4px;top:258px;width:149.6px;height:5.4px;background:#4a4a4a;border-top:0.7px solid #3c3c3c;"></div>
<div class="a" style="left:1134.2px;top:260.3px;width:12px;height:1.2px;background:#3a3a3a;"></div>
<svg class="a" style="left:1069px;top:107px;" width="4" height="6.4" viewBox="0 0 4 6.4"><path d="M0.4 2.4 L1.9 0.6 L3.4 2.4 M0.4 4 L1.9 5.8 L3.4 4" fill="none" stroke="#cfcfcf" stroke-width="0.8"/></svg>
<div class="a t" style="left:1075.6px;top:104.2px;height:12px;line-height:12px;font-size:7.7px;color:#ececec;-webkit-text-stroke:0.45px currentColor;"><span class="c">漸</span><span class="c">層</span></div>
<div class="a t" style="left:1102.4px;top:104.2px;height:12px;line-height:12px;font-size:7.7px;color:#a4a4a4;"><span class="c">顏</span><span class="c">色</span></div>
<div class="a t" style="left:1130px;top:104.2px;height:12px;line-height:12px;font-size:7.7px;color:#a4a4a4;"><span class="c">導</span><span class="c">覽</span><span class="c">器</span></div>
<div class="a" style="left:1123.4px;top:101px;width:0.7px;height:17px;background:#4e4e4e;"></div>
<div class="a" style="left:1158px;top:101px;width:0.7px;height:17px;background:#4e4e4e;"></div>
<svg class="a" style="left:1188px;top:107.5px;" width="6.4" height="4.6" viewBox="0 0 6.4 4.6"><path d="M0.5 0.4 L2.6 2.3 L0.5 4.2 M3.5 0.4 L5.6 2.3 L3.5 4.2" fill="none" stroke="#d8d8d8" stroke-width="1.05"/></svg>
<div class="a" style="left:1198.6px;top:106.4px;width:0.8px;height:7px;background:#9a9a9a;"></div>
<svg class="a" style="left:1204px;top:107.1px;" width="7.4" height="5.4" viewBox="0 0 7.4 5.4"><path d="M0 0.5 H7.4 M0 2.7 H7.4 M0 4.9 H7.4" stroke="#c8c8c8" stroke-width="0.75"/></svg>
<div class="a" style="left:1069px;top:122.5px;width:20.2px;height:20.4px;background:linear-gradient(90deg,#888 0%,#bdbdbd 12%,#f6f6f6 30%,#ffffff 44%,#c4c4c4 60%,#505050 76%,#080808 90%,#000 100%);"></div>
<svg class="a" style="left:1091.6px;top:132.2px;" width="3" height="2" viewBox="0 0 3 2"><path d="M0 0 H3 L1.5 1.8Z" fill="#d8d8d8"/></svg>
<div class="a t" style="left:1109.4px;top:125px;height:12px;line-height:12px;font-size:7.7px;color:#ececec;-webkit-text-stroke:0.45px currentColor;"><span class="c">類</span><span class="c">型</span> <span class="l">:</span></div>
<div class="a" style="left:1133.6px;top:125px;width:11.4px;height:10.6px;background:linear-gradient(90deg,#3c3c3c,#e2e2e2);box-sizing:border-box;border:0.9px solid #c2c2c2;"></div>
<div class="a" style="left:1149.6px;top:125px;width:11.4px;height:10.6px;background:radial-gradient(circle,#e6e6e6 0%,#bdbdbd 35%,#555 100%);box-sizing:border-box;border:0.9px solid #c2c2c2;"></div>
<div class="a" style="left:1165.8px;top:125px;width:11.4px;height:10.6px;background:linear-gradient(155deg,#4a4a4a 0%,#8a8a8a 30%,#e6e6e6 52%,#9a9a9a 70%,#555 100%);box-sizing:border-box;border:0.9px solid #c2c2c2;"></div>
<svg class="a" style="left:0px;top:0px;" width="1240" height="300" viewBox="0 0 1240 300"><rect x="1075.4" y="153.2" width="12.2" height="12.2" fill="#fff"/><rect x="1079.4" y="157.2" width="4.2" height="4.2" fill="#535353"/><path d="M1075.8 165 L1087.2 153.6" stroke="#e01818" stroke-width="1.5"/><rect x="1069.5" y="147.5" width="11.2" height="11" fill="#3c3c3c" stroke="#cfcfcf" stroke-width="1"/></svg>
<div class="a t" style="left:1110px;top:143.8px;height:12px;line-height:12px;font-size:7.7px;color:#737373;"><span class="c">筆</span><span class="c">畫</span> <span class="l">:</span></div>
<div class="a" style="left:1133.2px;top:143.6px;width:11.4px;height:11.4px;box-sizing:border-box;border:0.8px solid #6a6a6a;"></div>
<svg class="a" style="left:1135.8px;top:146px;" width="7" height="7" viewBox="0 0 7 7"><path d="M0.8 6.6 V1 H6.4" fill="none" stroke="#727272" stroke-width="1.6"/></svg>
<div class="a" style="left:1148.8px;top:143.6px;width:11.4px;height:11.4px;box-sizing:border-box;border:0.8px solid #6a6a6a;"></div>
<svg class="a" style="left:1151.4px;top:146px;" width="7" height="7" viewBox="0 0 7 7"><path d="M0.8 6.6 V1 H6.4" fill="none" stroke="#727272" stroke-width="1.6"/></svg>
<div class="a" style="left:1163.8px;top:143.6px;width:11.4px;height:11.4px;box-sizing:border-box;border:0.8px solid #6a6a6a;"></div>
<svg class="a" style="left:1166.4px;top:146px;" width="7" height="7" viewBox="0 0 7 7"><path d="M0.8 6.6 V1 H6.4" fill="none" stroke="#727272" stroke-width="1.6"/></svg>
<svg class="a" style="left:1072px;top:173px;" width="10" height="9.6" viewBox="0 0 10 9.6"><g fill="none" stroke="#7a7a7a" stroke-width="0.8"><rect x="0.4" y="0.6" width="4" height="3"/><rect x="5.6" y="5.6" width="4" height="3"/><path d="M6 2.2 H9.4 M0.4 7.2 H3.8"/></g></svg>
<svg class="a" style="left:1119.4px;top:160.8px;" width="9.4" height="8.6" viewBox="0 0 9.4 8.6"><path d="M8 1 L0.8 7.8 H8.8" fill="none" stroke="#d0d0d0" stroke-width="0.9"/><path d="M5 7.6 A3.6 3.6 0 0 0 3.8 5" fill="none" stroke="#d0d0d0" stroke-width="0.8"/></svg>
<div class="a" style="left:1132px;top:159.6px;width:44.6px;height:12.2px;background:#5b5b5b;border-radius:1px;"></div>
<svg class="a" style="left:1168.2px;top:163.8px;" width="4.8" height="3.6" viewBox="0 0 4.8 3.6"><path d="M0.3 0.6 L2.4 2.8 L4.5 0.6" fill="none" stroke="#777" stroke-width="0.9"/></svg>
<svg class="a" style="left:1117.8px;top:176.6px;" width="11.6" height="11" viewBox="0 0 11.6 11"><path d="M1.6 0.8 V10 M0.2 2.4 L1.6 0.6 L3 2.4 M0.2 8.4 L1.6 10.2 L3 8.4" fill="none" stroke="#d0d0d0" stroke-width="0.8"/><ellipse cx="7.6" cy="5.2" rx="3.6" ry="2.6" fill="none" stroke="#d0d0d0" stroke-width="0.9"/><path d="M4.2 9.8 H11" stroke="#d0d0d0" stroke-width="0.8" stroke-dasharray="1 0.8"/></svg>
<div class="a" style="left:1132px;top:176.2px;width:44.6px;height:12.2px;background:#5b5b5b;border-radius:1px;"></div>
<svg class="a" style="left:1168.2px;top:180.4px;" width="4.8" height="3.6" viewBox="0 0 4.8 3.6"><path d="M0.3 0.6 L2.4 2.8 L4.5 0.6" fill="none" stroke="#777" stroke-width="0.9"/></svg>
<div class="a" style="left:1075.6px;top:202.6px;width:114px;height:10px;background:linear-gradient(90deg,#efefef 0%,#d4d4d4 10%,#8c8c8c 22%,#f2f2f2 30%,#ffffff 36%,#f6f6f6 44%,#a8a8a8 60%,#4c4c4c 72%,#0c0c0c 84%,#000 90%,#000 100%);"></div>
<svg class="a" style="left:1199px;top:203px;" width="8" height="10" viewBox="0 0 8 10"><path d="M0.4 2 H7.2 M2.6 2 V0.8 H5 V2 M1.2 2.4 L1.6 9.4 H6 L6.4 2.4" fill="#606060" stroke="#6e6e6e" stroke-width="0.8"/></svg>
<svg class="a" style="left:1072.8px;top:234px;" width="12" height="12.6" viewBox="0 0 12 12.6"><path d="M9 0.8 C10.4 0 12 1.6 11 3 L9.2 4.8 L9.8 5.4 L8.8 6.4 L5.6 3.2 L6.6 2.2 L7.2 2.8 Z" fill="#777"/><path d="M6.6 4.6 L1.6 9.6 L0.8 11.6 L2.8 10.8 L7.8 5.8" fill="none" stroke="#777" stroke-width="0.9"/></svg>
<div class="a t" style="left:1094.4px;top:226.8px;height:12px;line-height:12px;font-size:7.7px;color:#737373;"><span class="c">不</span><span class="c">透</span><span class="c">明</span><span class="c">度</span> <span class="l">:</span></div>
<div class="a" style="left:1132px;top:226.2px;width:44.6px;height:12px;background:#5b5b5b;border-radius:1px;"></div>
<svg class="a" style="left:1168.2px;top:230.4px;" width="4.8" height="3.6" viewBox="0 0 4.8 3.6"><path d="M0.3 0.6 L2.4 2.8 L4.5 0.6" fill="none" stroke="#777" stroke-width="0.9"/></svg>
<div class="a t" style="left:1110px;top:243.2px;height:12px;line-height:12px;font-size:7.7px;color:#737373;"><span class="c">位</span><span class="c">置</span> <span class="l">:</span></div>
<div class="a" style="left:1132px;top:242.8px;width:44.6px;height:12px;background:#5b5b5b;border-radius:1px;"></div>
<svg class="a" style="left:1168.2px;top:247px;" width="4.8" height="3.6" viewBox="0 0 4.8 3.6"><path d="M0.3 0.6 L2.4 2.8 L4.5 0.6" fill="none" stroke="#777" stroke-width="0.9"/></svg>
<div class="a" style="left:869.8px;top:300px;width:153.6px;height:186.8px;background:#535353;box-shadow:0 0 0 0.7px #383838;"></div>
<div class="a" style="left:869.4px;top:299.6px;width:154.4px;height:19.6px;background:#444444;"></div>
<div class="a" style="left:869.4px;top:300.2px;width:28px;height:19px;background:#535353;"></div>
<div class="a" style="left:869.4px;top:482.6px;width:154.4px;height:4.6px;background:#4a4a4a;border-top:0.7px solid #3c3c3c;"></div>
<div class="a" style="left:940.6px;top:484.5px;width:12px;height:1.2px;background:#3a3a3a;"></div>
<div class="a t" style="left:876px;top:304.6px;height:12px;line-height:12px;font-size:7.7px;color:#e8e8e8;"><span class="c">外</span><span class="c">觀</span></div>
<svg class="a" style="left:997.4px;top:308.5px;" width="6.4" height="4.6" viewBox="0 0 6.4 4.6"><path d="M0.5 0.4 L2.6 2.3 L0.5 4.2 M3.5 0.4 L5.6 2.3 L3.5 4.2" fill="none" stroke="#d8d8d8" stroke-width="1.05"/></svg>
<div class="a" style="left:1008px;top:307.4px;width:0.8px;height:7px;background:#9a9a9a;"></div>
<svg class="a" style="left:1013px;top:308.1px;" width="7.4" height="5.4" viewBox="0 0 7.4 5.4"><path d="M0 0.5 H7.4 M0 2.7 H7.4 M0 4.9 H7.4" stroke="#c8c8c8" stroke-width="0.75"/></svg>
<div class="a" style="left:872.8px;top:322.8px;width:147.6px;height:146px;background:#535353;box-sizing:border-box;border:0.7px solid #494949;"></div>
<div class="a" style="left:873px;top:341.4px;width:147px;height:0.8px;background:#4b4b4b;"></div>
<div class="a" style="left:873px;top:357.5px;width:147px;height:0.8px;background:#4b4b4b;"></div>
<div class="a" style="left:873px;top:373.8px;width:147px;height:0.8px;background:#4b4b4b;"></div>
<div class="a" style="left:873px;top:389.6px;width:147px;height:0.8px;background:#4b4b4b;"></div>
<div class="a" style="left:873px;top:405.6px;width:147px;height:0.8px;background:#4b4b4b;"></div>
<div class="a" style="left:873px;top:421.6px;width:147px;height:0.8px;background:#4b4b4b;"></div>
<div class="a" style="left:889.4px;top:341.4px;width:0.8px;height:80.6px;background:#4b4b4b;"></div>
<div class="a" style="left:875.6px;top:326.2px;width:11.6px;height:12.8px;background:#3c3c3c;box-sizing:border-box;border:0.9px solid #cfcfcf;"></div>
<div class="a t" style="left:906px;top:327.6px;height:12px;line-height:12px;font-size:7.7px;color:#cfcfcf;"><span class="c">無</span><span class="c">選</span><span class="c">取</span><span class="c">範</span><span class="c">圍</span></div>
<svg class="a" style="left:877px;top:347px;" width="9" height="5.4" viewBox="0 0 9 5.4"><path d="M0.4 2.6 C2 0 6.6 0 8.2 2.6 C6.6 5.2 2 5.2 0.4 2.6Z" fill="none" stroke="#e4e4e4" stroke-width="0.95"/><circle cx="4.3" cy="2.6" r="1.35" fill="#e4e4e4"/></svg>
<svg class="a" style="left:877px;top:363.4px;" width="9" height="5.4" viewBox="0 0 9 5.4"><path d="M0.4 2.6 C2 0 6.6 0 8.2 2.6 C6.6 5.2 2 5.2 0.4 2.6Z" fill="none" stroke="#646464" stroke-width="0.95"/><circle cx="4.3" cy="2.6" r="1.35" fill="#646464"/></svg>
<svg class="a" style="left:877px;top:379.4px;" width="9" height="5.4" viewBox="0 0 9 5.4"><path d="M0.4 2.6 C2 0 6.6 0 8.2 2.6 C6.6 5.2 2 5.2 0.4 2.6Z" fill="none" stroke="#e4e4e4" stroke-width="0.95"/><circle cx="4.3" cy="2.6" r="1.35" fill="#e4e4e4"/></svg>
<svg class="a" style="left:877px;top:395.8px;" width="9" height="5.4" viewBox="0 0 9 5.4"><path d="M0.4 2.6 C2 0 6.6 0 8.2 2.6 C6.6 5.2 2 5.2 0.4 2.6Z" fill="none" stroke="#646464" stroke-width="0.95"/><circle cx="4.3" cy="2.6" r="1.35" fill="#646464"/></svg>
<svg class="a" style="left:877px;top:412px;" width="9" height="5.4" viewBox="0 0 9 5.4"><path d="M0.4 2.6 C2 0 6.6 0 8.2 2.6 C6.6 5.2 2 5.2 0.4 2.6Z" fill="none" stroke="#646464" stroke-width="0.95"/><circle cx="4.3" cy="2.6" r="1.35" fill="#646464"/></svg>
<svg class="a" style="left:894px;top:347.7px;" width="5" height="3.8" viewBox="0 0 5 3.8"><path d="M0.3 0.6 L2.5 3 L4.7 0.6" fill="none" stroke="#e0e0e0" stroke-width="1.1"/></svg>
<svg class="a" style="left:894px;top:380.1px;" width="5" height="3.8" viewBox="0 0 5 3.8"><path d="M0.3 0.6 L2.5 3 L4.7 0.6" fill="none" stroke="#e0e0e0" stroke-width="1.1"/></svg>
<div class="a t" style="left:906px;top:346.3px;height:7.8px;line-height:7.8px;font-size:7.7px;color:#e6e6e6;border-bottom:0.6px solid #8c8c8c;"><span class="c">筆</span><span class="c">畫</span> <span class="l">:</span></div>
<svg class="a" style="left:934px;top:344px;" width="11" height="11.4" viewBox="0 0 11 11.4"><rect x="0.5" y="0.5" width="9.8" height="10.2" fill="#fff" stroke="#8a8a8a" stroke-width="0.8"/><rect x="1.8" y="1.8" width="7.2" height="7.6" fill="#fff" stroke="#555" stroke-width="0.6"/><path d="M1.6 9.6 L9.2 1.6" stroke="#e01818" stroke-width="1.4"/></svg>
<div class="a t" style="left:906px;top:377.9px;height:9.4px;line-height:9.4px;font-size:7.7px;color:#e6e6e6;"><span class="c">填</span><span class="c">色</span> <span class="l">:</span></div>
<svg class="a" style="left:934px;top:376.4px;" width="11" height="11.4" viewBox="0 0 11 11.4"><rect x="0.5" y="0.5" width="9.8" height="10.2" fill="#d8d8d8" stroke="#e0e0e0" stroke-width="0.8"/><rect x="2.4" y="2.4" width="6" height="6.4" fill="#2e2e2e" stroke="#1a1a1a" stroke-width="0.8"/></svg>
<div class="a t" style="left:921px;top:362.9px;height:7.8px;line-height:7.8px;font-size:7.7px;color:#e0e0e0;border-bottom:0.6px solid #8c8c8c;"><span class="c">不</span><span class="c">透</span><span class="c">明</span><span class="c">度</span> <span class="l">:</span></div>
<div class="a t" style="left:958.8px;top:360.8px;height:12px;line-height:12px;font-size:7.7px;color:#e0e0e0;"><span class="c">預</span><span class="c">設</span></div>
<div class="a t" style="left:921px;top:395.3px;height:7.8px;line-height:7.8px;font-size:7.7px;color:#e0e0e0;border-bottom:0.6px solid #8c8c8c;"><span class="c">不</span><span class="c">透</span><span class="c">明</span><span class="c">度</span> <span class="l">:</span></div>
<div class="a t" style="left:958.8px;top:393.2px;height:12px;line-height:12px;font-size:7.7px;color:#e0e0e0;"><span class="c">預</span><span class="c">設</span></div>
<div class="a t" style="left:906px;top:411.5px;height:7.8px;line-height:7.8px;font-size:7.7px;color:#e0e0e0;border-bottom:0.6px solid #8c8c8c;"><span class="c">不</span><span class="c">透</span><span class="c">明</span><span class="c">度</span> <span class="l">:</span></div>
<div class="a t" style="left:943.8px;top:409.4px;height:12px;line-height:12px;font-size:7.7px;color:#e0e0e0;"><span class="c">預</span><span class="c">設</span></div>
<svg class="a" style="left:0px;top:0px;" width="1240" height="500" viewBox="0 0 1240 500"><rect x="878" y="471.6" width="7" height="7.4" fill="none" stroke="#dcdcdc" stroke-width="1.3"/><rect x="894.6" y="471.6" width="7.4" height="7.4" fill="none" stroke="#cfcfcf" stroke-width="0.8"/><rect x="896.2" y="473.2" width="4.2" height="4.2" fill="#d8d8d8"/><circle cx="968.6" cy="475.4" r="3.4" fill="none" stroke="#e0e0e0" stroke-width="1.2"/><path d="M966.2 473 L971 477.8" stroke="#e0e0e0" stroke-width="1.2"/><rect x="982.4" y="471.8" width="7.2" height="7.2" fill="none" stroke="#6a6a6a" stroke-width="0.8"/><path d="M986 473.6 V477.2 M984.2 475.4 H987.8" stroke="#6a6a6a" stroke-width="0.8"/><path d="M998 472.6 H1005 M1000.2 472.6 V471.4 H1002.8 V472.6 M998.8 473 L999.2 479.4 H1003.8 L1004.2 473" fill="#5e5e5e" stroke="#6a6a6a" stroke-width="0.8"/></svg>
<div class="a t" style="left:910.4px;top:470px;height:12px;line-height:12px;font-size:9px;color:#dcdcdc;font-style:italic;letter-spacing:-0.3px;">fx</div>
<div class="a" style="left:919.8px;top:478.4px;width:1.1px;height:1.1px;background:#dcdcdc;"></div>
<div class="a" style="left:1025px;top:293px;width:24px;height:33.6px;background:#535353;border-radius:2px 2px 1px 1px;box-shadow:0 0 0 0.7px #333;"></div>
<div class="a" style="left:1025px;top:293px;width:24px;height:8.2px;background:#3e3e3e;border-radius:2px 2px 0 0;"></div>
<svg class="a" style="left:1029.8px;top:295.5px;" width="5" height="3.4" viewBox="0 0 5 3.4"><path d="M0 0 L2.3 1.7 L0 3.4Z M2.9 0 L5.2 1.7 L2.9 3.4Z" fill="#e2e2e2"/></svg>
<svg class="a" style="left:1041.6px;top:294.9px;" width="4.6" height="4.6" viewBox="0 0 4.6 4.6"><path d="M0.5 0.5 L4.1 4.1 M4.1 0.5 L0.5 4.1" stroke="#f0f0f0" stroke-width="1.2"/></svg>
<div class="a" style="left:1030.6px;top:303.4px;width:13px;height:2.3px;background:#3d3d3d;border-radius:0.6px;"></div>
<div class="a" style="left:1028.6px;top:309px;width:17px;height:14px;background:#2e2e2e;border-radius:1px;"></div>
<svg class="a" style="left:1030.6px;top:309.6px;" width="13" height="13" viewBox="0 0 13 13"><circle cx="6.5" cy="6.5" r="5.2" fill="none" stroke="#c8c8c8" stroke-width="1" stroke-dasharray="0.9 1.15"/><circle cx="6.5" cy="6.5" r="3.3" fill="#e2e2e2"/></svg>
<div class="a" style="left:1031px;top:340.4px;width:152.8px;height:192.4px;background:#535353;box-shadow:0 0 0 0.7px #383838;"></div>
<div class="a" style="left:1030.6px;top:340px;width:153.6px;height:8.8px;background:#414141;"></div>
<div class="a" style="left:1030.6px;top:348.8px;width:153.6px;height:17.6px;background:#444444;"></div>
<div class="a" style="left:1030.6px;top:349.4px;width:28.2px;height:17px;background:#535353;"></div>
<div class="a" style="left:1030.6px;top:528.8px;width:153.6px;height:4.4px;background:#4a4a4a;border-top:0.7px solid #3c3c3c;"></div>
<div class="a" style="left:1101.4px;top:530.6px;width:12px;height:1.2px;background:#3a3a3a;"></div>
<svg class="a" style="left:1164.6px;top:343.5px;" width="5" height="3.4" viewBox="0 0 5 3.4"><path d="M2.2 0.2 L0 1.7 L2.2 3.2Z M4.8 0.2 L2.6 1.7 L4.8 3.2Z" fill="#dedede"/></svg>
<svg class="a" style="left:1177px;top:342.9px;" width="4.6" height="4.6" viewBox="0 0 4.6 4.6"><path d="M0.5 0.5 L4.1 4.1 M4.1 0.5 L0.5 4.1" stroke="#f0f0f0" stroke-width="1.2"/></svg>
<div class="a t" style="left:1037px;top:352.2px;height:12px;line-height:12px;font-size:7.7px;color:#e8e8e8;"><span class="c">色</span><span class="c">票</span></div>
<div class="a" style="left:1174.4px;top:355px;width:5.4px;height:5px;background:#6a6a6a;"></div>
<svg class="a" style="left:0px;top:0px;" width="1240" height="400" viewBox="0 0 1240 400"><rect x="1040.8" y="377.4" width="12.2" height="12.2" fill="#fff"/><rect x="1044.8" y="381.4" width="4.2" height="4.2" fill="#535353"/><path d="M1041.2 389.2 L1052.6 377.8" stroke="#e01818" stroke-width="1.5"/><rect x="1034.9" y="371.7" width="11.2" height="11" fill="#3c3c3c" stroke="#cfcfcf" stroke-width="1"/></svg>
<div class="a" style="left:1149.4px;top:371.6px;width:16.4px;height:13.2px;background:#585858;"></div>
<svg class="a" style="left:1153px;top:373.6px;" width="8.6" height="10" viewBox="0 0 8.6 10"><path d="M0 0.8 H8.4 M0 3.5 H8.4 M0 6.2 H8.4 M0 8.9 H8.4" stroke="#dcdcdc" stroke-width="1"/></svg>
<div class="a" style="left:1166.2px;top:371.6px;width:13.8px;height:13.2px;background:#303030;border-radius:1px;"></div>
<svg class="a" style="left:1168.8px;top:373.8px;" width="9" height="9" viewBox="0 0 9 9"><rect x="0.3" y="0.3" width="2.3" height="2.3" fill="#f0f0f0"/><rect x="0.3" y="3.2" width="2.3" height="2.3" fill="#f0f0f0"/><rect x="0.3" y="6.1" width="2.3" height="2.3" fill="#f0f0f0"/><rect x="3.2" y="0.3" width="2.3" height="2.3" fill="#f0f0f0"/><rect x="3.2" y="3.2" width="2.3" height="2.3" fill="#f0f0f0"/><rect x="3.2" y="6.1" width="2.3" height="2.3" fill="#f0f0f0"/><rect x="6.1" y="0.3" width="2.3" height="2.3" fill="#f0f0f0"/><rect x="6.1" y="3.2" width="2.3" height="2.3" fill="#f0f0f0"/><rect x="6.1" y="6.1" width="2.3" height="2.3" fill="#f0f0f0"/></svg>
<div class="a" style="left:1033.6px;top:390.4px;width:146.8px;height:124.4px;box-sizing:border-box;border:0.7px solid #4c4c4c;"></div>
<svg class="a" style="left:0px;top:0px;" width="1240" height="460" viewBox="0 0 1240 460"><defs><linearGradient id="sg1"><stop offset="0" stop-color="#fff"/><stop offset="0.3" stop-color="#eee"/><stop offset="1" stop-color="#2a2a2a"/></linearGradient><linearGradient id="sg2"><stop offset="0" stop-color="#ffe200"/><stop offset="1" stop-color="#f78a10"/></linearGradient><linearGradient id="sg3"><stop offset="0" stop-color="#2a98e0"/><stop offset="0.55" stop-color="#9cd0f0"/><stop offset="1" stop-color="#eef6fc"/></linearGradient></defs><rect x="1034.5" y="393.7" width="8.58" height="8.6" fill="#fff"/><path d="M1034.9 401.9 L1042.68 394.1" stroke="#e01818" stroke-width="1.2"/><rect x="1043.53" y="393.7" width="8.58" height="8.6" fill="#f4f4f4"/><path d="M1047.82 393.7 V402.3 M1043.53 398 H1052.11" stroke="#5a7ea0" stroke-width="0.8"/><circle cx="1047.82" cy="398" r="1.7" fill="#f4f4f4" stroke="#5a7ea0" stroke-width="0.7"/><rect x="1052.56" y="393.7" width="8.58" height="8.6" fill="#ffffff"/><rect x="1061.59" y="393.7" width="8.58" height="8.6" fill="#000000"/><rect x="1070.62" y="393.7" width="8.58" height="8.6" fill="#ee1c1c"/><rect x="1079.65" y="393.7" width="8.58" height="8.6" fill="#ffe600"/><rect x="1088.68" y="393.7" width="8.58" height="8.6" fill="#009a46"/><rect x="1097.71" y="393.7" width="8.58" height="8.6" fill="#1a9df0"/><rect x="1106.74" y="393.7" width="8.58" height="8.6" fill="#2a2aa6"/><rect x="1115.77" y="393.7" width="8.58" height="8.6" fill="#ee2a98"/><rect x="1124.8" y="393.7" width="8.58" height="8.6" fill="#de2a24"/><rect x="1133.83" y="393.7" width="8.58" height="8.6" fill="#f65222"/><rect x="1142.86" y="393.7" width="8.58" height="8.6" fill="#f77214"/><rect x="1151.89" y="393.7" width="8.58" height="8.6" fill="#fb9a12"/><rect x="1160.92" y="393.7" width="8.58" height="8.6" fill="#fcb222"/><rect x="1034.5" y="403" width="8.58" height="8.6" fill="#fbe81a"/><rect x="1043.53" y="403" width="8.58" height="8.6" fill="#dfdc1c"/><rect x="1052.56" y="403" width="8.58" height="8.6" fill="#8ec72a"/><rect x="1061.59" y="403" width="8.58" height="8.6" fill="#22a640"/><rect x="1070.62" y="403" width="8.58" height="8.6" fill="#009648"/><rect x="1079.65" y="403" width="8.58" height="8.6" fill="#007046"/><rect x="1088.68" y="403" width="8.58" height="8.6" fill="#12a878"/><rect x="1097.71" y="403" width="8.58" height="8.6" fill="#0aa0a0"/><rect x="1106.74" y="403" width="8.58" height="8.6" fill="#22a2e8"/><rect x="1115.77" y="403" width="8.58" height="8.6" fill="#127ac8"/><rect x="1124.8" y="403" width="8.58" height="8.6" fill="#1a3aa0"/><rect x="1133.83" y="403" width="8.58" height="8.6" fill="#1a2a7a"/><rect x="1142.86" y="403" width="8.58" height="8.6" fill="#682a98"/><rect x="1151.89" y="403" width="8.58" height="8.6" fill="#9e1e90"/><rect x="1160.92" y="403" width="8.58" height="8.6" fill="#c61a72"/><rect x="1034.5" y="412.3" width="8.58" height="8.6" fill="#ee2268"/><rect x="1043.53" y="412.3" width="8.58" height="8.6" fill="#f62a90"/><rect x="1052.56" y="412.3" width="8.58" height="8.6" fill="#cfbba0"/><rect x="1061.59" y="412.3" width="8.58" height="8.6" fill="#ae9880"/><rect x="1070.62" y="412.3" width="8.58" height="8.6" fill="#8c7460"/><rect x="1079.65" y="412.3" width="8.58" height="8.6" fill="#70503c"/><rect x="1088.68" y="412.3" width="8.58" height="8.6" fill="#cfa268"/><rect x="1097.71" y="412.3" width="8.58" height="8.6" fill="#c08a42"/><rect x="1106.74" y="412.3" width="8.58" height="8.6" fill="#a86c2a"/><rect x="1115.77" y="412.3" width="8.58" height="8.6" fill="#8c541a"/><rect x="1124.8" y="412.3" width="8.58" height="8.6" fill="#7a400a"/><rect x="1133.83" y="412.3" width="8.58" height="8.6" fill="#5a2c0a"/><rect x="1142.86" y="412.3" width="8.58" height="8.6" fill="url(#sg1)"/><rect x="1151.89" y="412.3" width="8.58" height="8.6" fill="url(#sg2)"/><rect x="1160.92" y="412.3" width="8.58" height="8.6" fill="url(#sg3)"/><rect x="1034.5" y="421.6" width="8.58" height="8.6" fill="#0a0a0a"/><circle cx="1038.79" cy="425.9" r="3" fill="#f4f4f4"/><circle cx="1038.79" cy="425.9" r="1.6" fill="none" stroke="#b0b0b0" stroke-width="0.5"/><rect x="1043.53" y="421.6" width="8.58" height="8.6" fill="#62bc2c"/><path d="M1047.82 422.6 L1051.11 425.9 L1047.82 429.2 L1044.53 425.9 Z" fill="#b8e48a"/><circle cx="1047.82" cy="425.9" r="1.3" fill="#f2f8e8"/><rect x="1052.56" y="421.6" width="8.58" height="8.6" fill="#c48c5c"/><path d="M1053.56 422.6 h2 v2 h-2z M1057.56 422.4 h2 v2.4 h-2z M1055.16 426.2 h1.8 v2 h-1.8z M1058.16 427.4 h2.2 v1.6 h-2.2z" fill="#e8c8a0"/><path d="M1035 432.2 h3 l0.9 1.1 h4 v5.2 h-7.9 z" fill="#cfcfcf"/><path d="M1035 434.6 h7.9" stroke="#8a8a8a" stroke-width="0.5"/><rect x="1043.53" y="431" width="8.58" height="8.6" fill="#000000"/><rect x="1052.96" y="431.2" width="7.98" height="8.6" fill="#444" stroke="#f0f0f0" stroke-width="0.9"/><rect x="1053.86" y="432.1" width="6.18" height="6.8" fill="none" stroke="#222" stroke-width="0.6"/><rect x="1070.62" y="431" width="8.58" height="8.6" fill="#6e6e6e"/><rect x="1079.65" y="431" width="8.58" height="8.6" fill="#868686"/><rect x="1088.68" y="431" width="8.58" height="8.6" fill="#9c9c9c"/><rect x="1097.71" y="431" width="8.58" height="8.6" fill="#b0b0b0"/><rect x="1106.74" y="431" width="8.58" height="8.6" fill="#c4c4c4"/><rect x="1115.77" y="431" width="8.58" height="8.6" fill="#d6d6d6"/><rect x="1124.8" y="431" width="8.58" height="8.6" fill="#e8e8e8"/><rect x="1133.83" y="431" width="8.58" height="8.6" fill="#f5f5f5"/><path d="M1035 441.7 h3 l0.9 1.1 h4 v5.2 h-7.9 z" fill="#cfcfcf"/><path d="M1035 444.1 h7.9" stroke="#8a8a8a" stroke-width="0.5"/><rect x="1043.53" y="440.5" width="8.58" height="8.6" fill="#ee1c1c"/><rect x="1052.56" y="440.5" width="8.58" height="8.6" fill="#f77214"/><rect x="1061.59" y="440.5" width="8.58" height="8.6" fill="#ffe000"/><rect x="1070.62" y="440.5" width="8.58" height="8.6" fill="#009a46"/><rect x="1079.65" y="440.5" width="8.58" height="8.6" fill="#1242be"/><rect x="1088.68" y="440.5" width="8.58" height="8.6" fill="#9838b0"/></svg>
<svg class="a" style="left:0px;top:0px;" width="1240" height="540" viewBox="0 0 1240 540"><path d="M1038 518.4 V526 M1040.4 518.4 V526 M1042.2 519 L1044.6 525.8" stroke="#d0d0d0" stroke-width="1.3" fill="none"/><rect x="1046.2" y="525" width="1.1" height="1.1" fill="#d0d0d0"/><rect x="1057.4" y="518.2" width="5.6" height="6.6" fill="#8c8c8c" stroke="#d0d0d0" stroke-width="0.8"/><path d="M1055 521.4 H1059 M1057.4 519.8 L1059.2 521.4 L1057.4 523 M1056.6 524 V526.4 H1061" fill="none" stroke="#d0d0d0" stroke-width="0.8"/><g fill="#d0d0d0"><rect x="1091.6" y="518.2" width="2.2" height="2.2"/><rect x="1094.4" y="518.2" width="2.2" height="2.2"/><rect x="1097.2" y="518.2" width="2.2" height="2.2"/><rect x="1091.6" y="521" width="2.2" height="2.2"/><rect x="1094.4" y="521" width="2.2" height="2.2"/><rect x="1091.6" y="523.8" width="2.2" height="2.2"/><rect x="1094.4" y="523.8" width="2.2" height="2.2"/><rect x="1100.2" y="525" width="1.1" height="1.1"/></g><rect x="1109.4" y="518.2" width="6.6" height="7.6" fill="none" stroke="#d0d0d0" stroke-width="0.9"/><path d="M1109.4 520.6 H1116" stroke="#d0d0d0" stroke-width="0.9"/><rect x="1111.4" y="522" width="2.6" height="2.4" fill="#d0d0d0"/><path d="M1124.6 518.6 h3.2 l1 1.3 h5 v6 h-9.2 z" fill="#d0d0d0"/><rect x="1143.4" y="518.2" width="7" height="7.6" fill="none" stroke="#d0d0d0" stroke-width="0.9"/><path d="M1146.9 520.2 V523.8 M1145.1 522 H1148.7" stroke="#d0d0d0" stroke-width="0.9"/><path d="M1159 519.4 H1166.4 M1161.4 519.4 V518.2 H1164 V519.4 M1159.8 519.8 L1160.2 526 H1165.2 L1165.6 519.8" fill="#8a8a8a" stroke="#d0d0d0" stroke-width="0.8"/></svg>
<!-- p_top -->
<div class="a" style="left:0px;top:0px;width:1240px;height:17.5px;background:#474747;"></div>
<div class="a" style="left:0px;top:17.2px;width:1240px;height:1px;background:#3a3a3a;"></div>
<div class="a" style="left:6px;top:2.6px;width:9.6px;height:9.4px;background:#300a00;border-radius:1.6px;"></div>
<div class="a t" style="left:5.9px;top:1.5px;height:12px;line-height:12px;font-size:7.2px;color:#f79c48;width:9.8px;text-align:center;font-weight:bold;letter-spacing:-0.3px;">Ai</div>
<svg class="a" style="left:24.9px;top:2.7px;" width="11.6" height="10.4" viewBox="0 0 11.6 10.4"><path d="M5.8 0.2 L11.6 5.4 L10.2 5.4 L10.2 10.2 L7.1 10.2 L7.1 6.6 L4.5 6.6 L4.5 10.2 L1.4 10.2 L1.4 5.4 L0 5.4 Z" fill="#d8d8d8"/></svg>
<div class="a" style="left:45.6px;top:2px;width:1px;height:13px;background:#515151;"></div>
<div class="a" style="left:376px;top:2px;width:0.8px;height:13px;background:#555555;"></div>
<div class="a t" style="left:57px;top:1.9px;height:12px;line-height:12px;font-size:7.7px;color:#d4d4d4;"><span class="c">檔</span><span class="c">案</span><span class="l">(F)</span></div>
<div class="a t" style="left:91px;top:1.9px;height:12px;line-height:12px;font-size:7.7px;color:#d4d4d4;"><span class="c">編</span><span class="c">輯</span><span class="l">(E)</span></div>
<div class="a t" style="left:126px;top:1.9px;height:12px;line-height:12px;font-size:7.7px;color:#d4d4d4;"><span class="c">物</span><span class="c">件</span><span class="l">(O)</span></div>
<div class="a t" style="left:163px;top:1.9px;height:12px;line-height:12px;font-size:7.7px;color:#d4d4d4;"><span class="c">文</span><span class="c">字</span><span class="l">(T)</span></div>
<div class="a t" style="left:198px;top:1.9px;height:12px;line-height:12px;font-size:7.7px;color:#d4d4d4;"><span class="c">選</span><span class="c">取</span><span class="l">(S)</span></div>
<div class="a t" style="left:232.5px;top:1.9px;height:12px;line-height:12px;font-size:7.7px;color:#d4d4d4;"><span class="c">效</span><span class="c">果</span><span class="l">(C)</span></div>
<div class="a t" style="left:268px;top:1.9px;height:12px;line-height:12px;font-size:7.7px;color:#d4d4d4;"><span class="c">檢</span><span class="c">視</span><span class="l">(V)</span></div>
<div class="a t" style="left:303.5px;top:1.9px;height:12px;line-height:12px;font-size:7.7px;color:#d4d4d4;"><span class="c">視</span><span class="c">窗</span><span class="l">(W)</span></div>
<div class="a t" style="left:341.5px;top:1.9px;height:12px;line-height:12px;font-size:7.7px;color:#d4d4d4;"><span class="c">說</span><span class="c">明</span><span class="l">(H)</span></div>
<div class="a" style="left:1060.5px;top:-1px;width:42px;height:16.5px;background:#1473e6;border-radius:8.5px;"></div>
<svg class="a" style="left:1066.5px;top:2px;" width="12" height="11" viewBox="0 0 12 11"><circle cx="5.3" cy="5.2" r="5" fill="#fff"/><circle cx="5.3" cy="3.9" r="1.9" fill="#1473e6"/><path d="M1.9 8.6 Q5.3 4.6 8.7 8.6 Q5.3 11.4 1.9 8.6Z" fill="#1473e6"/><circle cx="9" cy="8.3" r="2.6" fill="#1473e6"/><path d="M9 6.6 V10 M7.3 8.3 H10.7" stroke="#fff" stroke-width="0.9"/></svg>
<div class="a t" style="left:1081.5px;top:2.2px;height:12px;line-height:12px;font-size:7.7px;color:#ffffff;"><span class="c">共</span><span class="c">用</span></div>
<svg class="a" style="left:1109.5px;top:2.5px;" width="12" height="12" viewBox="0 0 12 12"><circle cx="4.6" cy="4.6" r="3.6" fill="none" stroke="#dcdcdc" stroke-width="1.3"/><path d="M7.3 7.3 L10.6 10.6" stroke="#dcdcdc" stroke-width="1.6" stroke-linecap="round"/></svg>
<div class="a" style="left:1129px;top:2px;width:0.8px;height:12px;background:#525252;"></div>
<svg class="a" style="left:1142px;top:4px;" width="12" height="8" viewBox="0 0 12 8"><rect x="0.3" y="0.2" width="3.2" height="3.2" fill="#d8d8d8"/><rect x="4.3" y="0.2" width="3.2" height="3.2" fill="#d8d8d8"/><rect x="8.3" y="0.2" width="3.2" height="3.2" fill="#d8d8d8"/><rect x="0.3" y="4.2" width="3.2" height="3.2" fill="#d8d8d8"/><rect x="4.3" y="4.2" width="7.2" height="3.2" fill="#d8d8d8"/></svg>
<svg class="a" style="left:1164.5px;top:3.2px;" width="12" height="10" viewBox="0 0 12 10"><rect x="0.6" y="0.6" width="10.6" height="8.2" fill="none" stroke="#d8d8d8" stroke-width="1.1"/><rect x="2.2" y="2.3" width="2" height="4.8" fill="#d8d8d8"/></svg>
<div class="a" style="left:1184.8px;top:0px;width:55.2px;height:9.5px;background:#4d4d4d;"></div>
<div class="a" style="left:1203px;top:0px;width:0.8px;height:9.5px;background:#434343;"></div>
<div class="a" style="left:1219.8px;top:0px;width:0.8px;height:9.5px;background:#434343;"></div>
<div class="a" style="left:1190px;top:5.6px;width:6.6px;height:1.1px;background:#d8d8d8;"></div>
<svg class="a" style="left:1206.5px;top:0.5px;" width="9" height="8" viewBox="0 0 9 8"><rect x="0.5" y="2.2" width="5.2" height="4.8" fill="#535353" stroke="#d8d8d8" stroke-width="0.9"/><path d="M2.4 2.2 V0.6 H8 V5.4 H5.8" fill="none" stroke="#d8d8d8" stroke-width="0.9"/></svg>
<svg class="a" style="left:1225px;top:0.2px;" width="8" height="7.4" viewBox="0 0 8 7.4"><path d="M0.8 0.7 L7 6.6 M7 0.7 L0.8 6.6" stroke="#dcdcdc" stroke-width="1.15"/></svg>
<div class="a" style="left:0px;top:18.2px;width:1240px;height:21px;background:#535353;"></div>
<div class="a" style="left:0px;top:38.8px;width:1240px;height:0.9px;background:#3c3c3c;"></div>
<div class="a" style="left:3.4px;top:22px;width:0.8px;height:13px;background:#6a6a6a;"></div>
<div class="a t" style="left:8.5px;top:23.6px;height:12px;line-height:12px;font-size:7.7px;color:#a4a4a4;"><span class="c">無</span><span class="c">選</span><span class="c">取</span><span class="c">範</span><span class="c">圍</span></div>
<div class="a" style="left:69px;top:22px;width:13px;height:13px;background:#3a3a3a;box-sizing:border-box;border:0.9px solid #c4c4c4;box-shadow:inset 0 0 0 0.7px #2c2c2c;"></div>
<svg class="a" style="left:85.3px;top:26.75px;" width="5" height="3.7" viewBox="0 0 5 3.7"><path d="M0.3 0.6 L2.5 2.9 L4.7 0.6" fill="none" stroke="#dcdcdc" stroke-width="1.1"/></svg>
<svg class="a" style="left:97px;top:22px;" width="13" height="13" viewBox="0 0 13 13"><rect x="0" y="0" width="13" height="13" fill="#fff"/><rect x="4.6" y="4.6" width="3.8" height="3.8" fill="#fff" stroke="#888" stroke-width="0.8"/><path d="M0.6 12.4 L12.4 0.6" stroke="#e01818" stroke-width="1.5"/></svg>
<svg class="a" style="left:113.3px;top:26.75px;" width="5" height="3.7" viewBox="0 0 5 3.7"><path d="M0.3 0.6 L2.5 2.9 L4.7 0.6" fill="none" stroke="#dcdcdc" stroke-width="1.1"/></svg>
<div class="a t" style="left:130px;top:25.7px;height:7.8px;line-height:7.8px;font-size:7.7px;color:#e4e4e4;-webkit-text-stroke:0.45px currentColor;border-bottom:0.6px solid #8c8c8c;"><span class="c">筆</span><span class="c">畫</span> <span class="l">:</span></div>
<svg class="a" style="left:157.2px;top:23.4px;" width="6" height="11" viewBox="0 0 6 11"><path d="M0.6 3.4 L2.9 1 L5.2 3.4 M0.6 7 L2.9 9.4 L5.2 7" fill="none" stroke="#dcdcdc" stroke-width="1.05"/></svg>
<div class="a" style="left:166px;top:22px;width:39.6px;height:13px;background:#454545;border-radius:1px;"></div>
<div class="a" style="left:194.6px;top:22px;width:0.7px;height:13px;background:#535353;"></div>
<svg class="a" style="left:197.4px;top:26.75px;" width="5" height="3.7" viewBox="0 0 5 3.7"><path d="M0.3 0.6 L2.5 2.9 L4.7 0.6" fill="none" stroke="#dcdcdc" stroke-width="1.1"/></svg>
<div class="a" style="left:210px;top:22px;width:58.5px;height:13px;background:#7b7b7b;border-radius:1px;"></div>
<svg class="a" style="left:272px;top:26.75px;" width="5" height="3.7" viewBox="0 0 5 3.7"><path d="M0.3 0.6 L2.5 2.9 L4.7 0.6" fill="none" stroke="#6c6c6c" stroke-width="1.1"/></svg>
<div class="a" style="left:284px;top:22px;width:56.4px;height:13px;background:#e6e6e6;border-radius:1px 0 0 1px;"></div>
<div class="a" style="left:288.7px;top:26.8px;width:3.5px;height:3.5px;background:#0c0c0c;border-radius:50%;"></div>
<div class="a t" style="left:300px;top:23.4px;height:12px;line-height:12px;font-size:7.7px;color:#2a2a2a;"><span class="l">5</span> <span class="c">點</span><span class="c">圓</span><span class="c">形</span></div>
<div class="a" style="left:340.8px;top:22px;width:10.6px;height:13px;background:#454545;border-radius:0 1px 1px 0;"></div>
<svg class="a" style="left:343.6px;top:26.75px;" width="5" height="3.7" viewBox="0 0 5 3.7"><path d="M0.3 0.6 L2.5 2.9 L4.7 0.6" fill="none" stroke="#dcdcdc" stroke-width="1.1"/></svg>
<div class="a t" style="left:356.5px;top:25.7px;height:7.8px;line-height:7.8px;font-size:7.7px;color:#e0e0e0;border-bottom:0.6px solid #8c8c8c;"><span class="c">不</span><span class="c">透</span><span class="c">明</span><span class="c">度</span> <span class="l">:</span></div>
<div class="a" style="left:397px;top:22px;width:31.6px;height:13px;background:#454545;border-radius:1px;"></div>
<div class="a t" style="left:399px;top:23.1px;height:12px;line-height:12px;font-size:8.3px;color:#e2e2e2;">100%</div>
<div class="a" style="left:430.2px;top:22px;width:10.4px;height:13px;background:#454545;border-radius:1px;"></div>
<svg class="a" style="left:433px;top:25.6px;" width="5" height="7" viewBox="0 0 5 7"><path d="M1.2 1 L3.6 3.3 L1.2 5.6" fill="none" stroke="#e4e4e4" stroke-width="1.15"/></svg>
<div class="a t" style="left:445px;top:23.6px;height:12px;line-height:12px;font-size:7.7px;color:#a6a6a6;"><span class="c">樣</span><span class="c">式</span> <span class="l">:</span></div>
<div class="a" style="left:469px;top:22px;width:12.6px;height:13px;background:#e8e8e8;"></div>
<div class="a" style="left:482.6px;top:22px;width:10.6px;height:13px;background:#454545;border-radius:0 1px 1px 0;"></div>
<svg class="a" style="left:485.2px;top:26.75px;" width="5" height="3.7" viewBox="0 0 5 3.7"><path d="M0.3 0.6 L2.5 2.9 L4.7 0.6" fill="none" stroke="#dcdcdc" stroke-width="1.1"/></svg>
<div class="a" style="left:497.6px;top:21px;width:0.8px;height:15px;background:#444444;"></div>
<div class="a" style="left:501.5px;top:22px;width:46px;height:12.6px;box-sizing:border-box;border:0.8px solid #696969;border-radius:1.6px;"></div>
<div class="a t" style="left:501.5px;top:23.2px;height:12px;line-height:12px;font-size:7.7px;color:#e8e8e8;width:46px;text-align:center;"><span class="c">文</span><span class="c">件</span><span class="c">設</span><span class="c">定</span></div>
<div class="a" style="left:551.5px;top:22px;width:45.6px;height:12.6px;box-sizing:border-box;border:0.8px solid #696969;border-radius:1.6px;"></div>
<div class="a t" style="left:551.5px;top:23.2px;height:12px;line-height:12px;font-size:7.7px;color:#e8e8e8;width:45.6px;text-align:center;"><span class="c">偏</span><span class="c">好</span><span class="c">設</span><span class="c">定</span></div>
<svg class="a" style="left:603px;top:22px;" width="14" height="13" viewBox="0 0 14 13"><rect x="1.5" y="4.3" width="3.6" height="4" fill="none" stroke="#cfcfcf" stroke-width="1.2"/><rect x="7" y="1.6" width="4" height="4" fill="none" stroke="#cfcfcf" stroke-width="1.2"/><path d="M6 5.2 L6 11.8 L7.8 10 L10.8 9.4 Z" fill="#dedede"/></svg>
<svg class="a" style="left:618.8px;top:26.6px;" width="6.4" height="3.4" viewBox="0 0 6.4 3.4"><path d="M0.5 0.5 L3.1 2.7 L5.8 0.5" fill="none" stroke="#e0e0e0" stroke-width="1"/></svg>
<svg class="a" style="left:1173px;top:24.6px;" width="8" height="8" viewBox="0 0 8 8"><g fill="#6e6e6e"><rect x="0.4" y="0.4" width="2.2" height="2.2"/><rect x="5" y="0.4" width="2.2" height="2.2"/><rect x="0.4" y="5" width="2.2" height="2.2"/><rect x="5" y="5" width="2.2" height="2.2"/></g></svg>
<svg class="a" style="left:1188.6px;top:23.4px;" width="12" height="10" viewBox="0 0 12 10"><g fill="#dcdcdc"><rect x="0.6" y="0" width="1.7" height="1.7"/><rect x="0.6" y="2.7" width="1.7" height="1.7"/><rect x="0.6" y="5.4" width="1.7" height="1.7"/><rect x="0.6" y="8.1" width="1.7" height="1.7"/></g><path d="M3.6 3.2 H7.4 A1.8 1.8 0 0 1 7.4 6.8 H3.6" fill="none" stroke="#dcdcdc" stroke-width="1.45"/></svg>
<svg class="a" style="left:1204px;top:26.7px;" width="4.4" height="3.4" viewBox="0 0 4.4 3.4"><path d="M0.3 0.6 L2.2 2.6 L4.1 0.6" fill="none" stroke="#6e6e6e" stroke-width="0.9"/></svg>
<svg class="a" style="left:1220.8px;top:25.6px;" width="8" height="6" viewBox="0 0 8 6"><g fill="#d0d0d0"><rect x="0" y="0.2" width="1.2" height="1.1"/><rect x="0" y="2.4" width="1.2" height="1.1"/><rect x="0" y="4.6" width="1.2" height="1.1"/><rect x="2" y="0.2" width="5.6" height="1.1"/><rect x="2" y="2.4" width="5.6" height="1.1"/><rect x="2" y="4.6" width="5.6" height="1.1"/></g></svg>
<div class="a" style="left:0px;top:39.6px;width:1240px;height:18.6px;background:#424242;"></div>
<div class="a" style="left:0px;top:39.6px;width:162.4px;height:18.2px;background:#535353;"></div>
<div class="a t" style="left:6px;top:43px;height:12px;line-height:12px;font-size:7.7px;color:#d2d2d2;"><span class="c">未</span><span class="c">命</span><span class="c">名</span><span class="l" style="letter-spacing:-0.08px">-2* @ 200 % (CMYK/CPU</span> <span class="c">預</span><span class="c">視</span><span class="l" style="letter-spacing:-0.08px">)</span></div>
<svg class="a" style="left:153.8px;top:46.7px;" width="5" height="5" viewBox="0 0 5 5"><path d="M0.7 0.7 L4.3 4.3 M4.3 0.7 L0.7 4.3" stroke="#f0f0f0" stroke-width="1.25"/></svg>
<div class="a" style="left:0px;top:57.6px;width:1216px;height:0.9px;background:#363636;"></div>
<!-- p_status -->
<div class="a" style="left:35px;top:655.2px;width:11.6px;height:9px;background:#4a4a4a;"></div>
<div class="a" style="left:82.4px;top:655.2px;width:11px;height:9px;background:#4a4a4a;"></div>
<div class="a" style="left:146.6px;top:655.2px;width:11px;height:9px;background:#4a4a4a;"></div>
<div class="a" style="left:0px;top:655.2px;width:34.6px;height:9px;background:#3b3b3b;"></div>
<div class="a t" style="left:3.4px;top:657.6px;height:12px;line-height:12px;font-size:8.2px;color:#dcdcdc;">200%</div>
<svg class="a" style="left:37.4px;top:660.1px;" width="5.2" height="3.8" viewBox="0 0 5.2 3.8"><path d="M0.3 0.6 L2.6 3 L4.9 0.6" fill="none" stroke="#dcdcdc" stroke-width="1.1"/></svg>
<div class="a" style="left:48.4px;top:655.2px;width:33.6px;height:9px;background:#3a3a3a;"></div>
<div class="a t" style="left:51.4px;top:657.6px;height:12px;line-height:12px;font-size:8.2px;color:#dcdcdc;">0°</div>
<svg class="a" style="left:84.6px;top:660.1px;" width="5.2" height="3.8" viewBox="0 0 5.2 3.8"><path d="M0.3 0.6 L2.6 3 L4.9 0.6" fill="none" stroke="#dcdcdc" stroke-width="1.1"/></svg>
<svg class="a" style="left:99px;top:658.4px;" width="16" height="6" viewBox="0 0 16 6"><path d="M0.6 0 V6" stroke="#666" stroke-width="1"/><path d="M5 0 L1.6 3 L5 6Z M15 0 L11.6 3 L15 6Z" fill="#666"/></svg>
<div class="a" style="left:118.6px;top:655.2px;width:27.6px;height:9px;background:#3a3a3a;"></div>
<div class="a t" style="left:121.6px;top:657.6px;height:12px;line-height:12px;font-size:8.2px;color:#dcdcdc;">1</div>
<svg class="a" style="left:149.4px;top:660.1px;" width="5.2" height="3.8" viewBox="0 0 5.2 3.8"><path d="M0.3 0.6 L2.6 3 L4.9 0.6" fill="none" stroke="#dcdcdc" stroke-width="1.1"/></svg>
<svg class="a" style="left:164px;top:658.4px;" width="16" height="6" viewBox="0 0 16 6"><path d="M0 0 L3.4 3 L0 6Z M10 0 L13.4 3 L10 6Z" fill="#666"/><path d="M14.6 0 V6" stroke="#666" stroke-width="1"/></svg>
<div class="a" style="left:186px;top:655.2px;width:130px;height:9px;background:#474747;"></div>
<div class="a t" style="left:243.4px;top:657.2px;height:12px;line-height:12px;font-size:7.4px;color:#b8b8b8;"><span class="c">選</span><span class="c">取</span></div>
<svg class="a" style="left:318.6px;top:658.6px;" width="4" height="6" viewBox="0 0 4 6"><path d="M0 0 L3.6 2.8 L0 5.6Z" fill="#d8d8d8"/></svg>
<svg class="a" style="left:329.6px;top:658.6px;" width="4" height="6" viewBox="0 0 4 6"><path d="M3.2 0.3 L0.6 2.8 L3.2 5.3" fill="none" stroke="#b8b8b8" stroke-width="1"/></svg>
<div class="a" style="left:761.6px;top:657px;width:16px;height:5.6px;background:#6b6b6b;border-radius:2.8px;"></div>
<svg class="a" style="left:1195.6px;top:658.6px;" width="4" height="6" viewBox="0 0 4 6"><path d="M0.6 0.3 L3.2 2.8 L0.6 5.3" fill="none" stroke="#b8b8b8" stroke-width="1"/></svg>
<div class="a" style="left:1215.6px;top:39.6px;width:24.4px;height:624.4px;background:#515151;"></div>
<div class="a" style="left:1213.9px;top:39.6px;width:1.7px;height:624.4px;background:#3c3c3c;"></div>
<div class="a" style="left:1239.3px;top:39.6px;width:0.7px;height:624.4px;background:#404040;"></div>
<div class="a" style="left:1215.6px;top:39.6px;width:23.7px;height:8.6px;background:#454545;"></div>
<svg class="a" style="left:1231px;top:42.2px;" width="5" height="3.4" viewBox="0 0 5 3.4"><path d="M2.2 0.2 L0 1.7 L2.2 3.2Z M4.8 0.2 L2.6 1.7 L4.8 3.2Z" fill="#dedede"/></svg>
<div class="a" style="left:1215.6px;top:48.4px;width:23.7px;height:25.4px;background:#535353;"></div>
<div class="a" style="left:1221.2px;top:50.3px;width:13.2px;height:2.2px;background:#454545;"></div>
<div class="a" style="left:1215.6px;top:73.8px;width:23.7px;height:0.8px;background:#3c3c3c;"></div>
<div class="a" style="left:1215.6px;top:74.6px;width:23.7px;height:25.4px;background:#535353;"></div>
<div class="a" style="left:1221.2px;top:76.5px;width:13.2px;height:2.2px;background:#454545;"></div>
<div class="a" style="left:1215.6px;top:100px;width:23.7px;height:0.8px;background:#3c3c3c;"></div>
<div class="a" style="left:1215.6px;top:100.8px;width:23.7px;height:62px;background:#535353;"></div>
<div class="a" style="left:1221.2px;top:102.7px;width:13.2px;height:2.2px;background:#454545;"></div>
<div class="a" style="left:1215.6px;top:162.8px;width:23.7px;height:0.8px;background:#3c3c3c;"></div>
<div class="a" style="left:1215.6px;top:163.6px;width:23.7px;height:116.4px;background:#535353;"></div>
<div class="a" style="left:1221.2px;top:165.5px;width:13.2px;height:2.2px;background:#454545;"></div>
<div class="a" style="left:1215.6px;top:280px;width:23.7px;height:0.8px;background:#3c3c3c;"></div>
<div class="a" style="left:1215.6px;top:280.8px;width:23.7px;height:25.8px;background:#535353;"></div>
<div class="a" style="left:1221.2px;top:282.7px;width:13.2px;height:2.2px;background:#454545;"></div>
<div class="a" style="left:1215.6px;top:306.6px;width:23.7px;height:0.8px;background:#3c3c3c;"></div>
<div class="a" style="left:1215.6px;top:307.4px;width:23.7px;height:45px;background:#535353;"></div>
<div class="a" style="left:1221.2px;top:309.3px;width:13.2px;height:2.2px;background:#454545;"></div>
<div class="a" style="left:1215.6px;top:352.4px;width:23.7px;height:0.8px;background:#3c3c3c;"></div>
<div class="a" style="left:1215.6px;top:353.2px;width:23.7px;height:25.2px;background:#535353;"></div>
<div class="a" style="left:1221.2px;top:355.1px;width:13.2px;height:2.2px;background:#454545;"></div>
<div class="a" style="left:1215.6px;top:378.4px;width:23.7px;height:0.8px;background:#3c3c3c;"></div>
<div class="a" style="left:1215.6px;top:379.2px;width:23.7px;height:25.2px;background:#535353;"></div>
<div class="a" style="left:1221.2px;top:381.1px;width:13.2px;height:2.2px;background:#454545;"></div>
<div class="a" style="left:1215.6px;top:404.4px;width:23.7px;height:0.8px;background:#3c3c3c;"></div>
<div class="a" style="left:1215.6px;top:405.2px;width:23.7px;height:25.8px;background:#535353;"></div>
<div class="a" style="left:1221.2px;top:407.1px;width:13.2px;height:2.2px;background:#454545;"></div>
<div class="a" style="left:1215.6px;top:431px;width:23.7px;height:0.8px;background:#3c3c3c;"></div>
<div class="a" style="left:1215.6px;top:431.8px;width:23.7px;height:25.6px;background:#535353;"></div>
<div class="a" style="left:1221.2px;top:433.7px;width:13.2px;height:2.2px;background:#454545;"></div>
<div class="a" style="left:1215.6px;top:457.4px;width:23.7px;height:0.8px;background:#3c3c3c;"></div>
<svg class="a" style="left:0px;top:0px;" width="1240" height="664" viewBox="0 0 1240 664"><path d="M1228 57.2 H1222.6 V67.6 H1232.6 V62.4" fill="none" stroke="#d4d4d4" stroke-width="1.3"/><path d="M1226.6 63.6 L1233 57 M1229.2 56.6 H1233.4 V60.8" fill="none" stroke="#d4d4d4" stroke-width="1.3"/><path d="M1222.2 83.6 h11.6 v7.6 h-7.4 l-2.6 2.8 v-2.8 h-1.6 z" fill="#d4d4d4"/><rect x="1219.4" y="108.6" width="17" height="14.4" rx="1" fill="#2e2e2e"/><defs><linearGradient id="dkG"><stop offset="0" stop-color="#3a3a3a"/><stop offset="1" stop-color="#e8e8e8"/></linearGradient></defs><rect x="1222.4" y="111.4" width="11.2" height="8.6" fill="url(#dkG)" stroke="#e8e8e8" stroke-width="1"/><path d="M1228 129.6 C1224 129.6 1221.6 132 1221.8 135 C1222 138.4 1225.6 140 1228.6 139.6 C1230.4 139.4 1229.6 137.4 1231 136.8 C1232.6 136.2 1234.6 136.6 1234.4 134 C1234.2 131.2 1231.4 129.6 1228 129.6Z" fill="#d4d4d4"/><g fill="#535353"><circle cx="1225" cy="133" r="1"/><circle cx="1228" cy="132" r="1"/><circle cx="1231.2" cy="133" r="1"/><circle cx="1225.4" cy="136.4" r="1"/></g><circle cx="1228" cy="152.4" r="4.2" fill="none" stroke="#d4d4d4" stroke-width="1.5"/><circle cx="1228" cy="152.4" r="1.5" fill="#d4d4d4"/><path d="M1228 146.2 V148.4 M1228 156.4 V158.6 M1221.8 152.4 H1224 M1232 152.4 H1234.2 M1223.6 148 L1225.2 149.6 M1230.8 155.2 L1232.4 156.8 M1232.4 148 L1230.8 149.6 M1225.2 155.2 L1223.6 156.8" stroke="#d4d4d4" stroke-width="1.1"/><path d="M1224.2 173 H1233.4 V183.4 H1224.2 C1223 183.4 1222.4 182.6 1222.4 181.6 V174.8 C1222.4 173.8 1223 173 1224.2 173Z" fill="none" stroke="#d4d4d4" stroke-width="1.2"/><path d="M1226 175 H1231.6 V181 H1226 Z" fill="#d4d4d4"/><path d="M1228.4 175 V178.6 L1229.6 177.6 L1230.8 178.6 V175Z" fill="#535353"/><path d="M1224.2 197.4 H1231.8 L1231.2 203 H1224.8 Z" fill="#d4d4d4"/><path d="M1225.8 197 L1224.2 192.6 M1228 197 V190.2 M1230.2 197 L1232.6 192.4" stroke="#d4d4d4" stroke-width="1.2"/><path d="M1227.2 192 L1228 189.8 L1228.8 192Z M1223 193.6 L1224 191.4 L1225.2 193Z M1231.8 193 L1233.6 191.4 L1233.4 193.8Z" fill="#d4d4d4"/><path d="M1222.2 211.4 H1233.8" stroke="#d4d4d4" stroke-width="1.1"/><path d="M1222.2 214.6 H1233.8" stroke="#d4d4d4" stroke-width="1.7"/><path d="M1222.2 218.2 H1233.8" stroke="#d4d4d4" stroke-width="2.2"/><defs><linearGradient id="dkQ" x1="0" y1="1" x2="1" y2="0"><stop offset="0" stop-color="#2a2a2a"/><stop offset="0.6" stop-color="#9a9a9a"/><stop offset="1" stop-color="#f0f0f0"/></linearGradient></defs><path d="M1222.8 227.2 C1229 227.2 1233.2 231.6 1233.2 237.8 H1222.8 Z" fill="url(#dkQ)" stroke="#d4d4d4" stroke-width="1"/><path d="M1222.8 245 V257.4" stroke="#d4d4d4" stroke-width="1.1"/><rect x="1224.4" y="246.8" width="5.6" height="3.6" fill="#d4d4d4"/><rect x="1224.4" y="252" width="9.4" height="3.6" fill="#d4d4d4"/><circle cx="1228" cy="269" r="6" fill="#d4d4d4"/><rect x="1227.1" y="267.6" width="1.8" height="4.8" fill="#535353"/><rect x="1227.1" y="264.8" width="1.8" height="1.8" fill="#535353"/><rect x="1226.2" y="267.6" width="1.8" height="1" fill="#535353"/><rect x="1226.2" y="271.6" width="3.6" height="1" fill="#535353"/><path d="M1222.6 292.6 H1233.6 M1222.6 296.2 H1233.6 M1222.6 299.8 H1233.6" stroke="#d4d4d4" stroke-width="0.9"/><g fill="#535353" stroke="#d4d4d4" stroke-width="0.9"><circle cx="1226" cy="292.6" r="1.3"/><circle cx="1230.6" cy="296.2" r="1.3"/><circle cx="1227" cy="299.8" r="1.3"/></g><path d="M1229.6 317.6 H1226 C1223.4 317.6 1223.4 322.4 1226 322.4 H1227.4 V328 M1229.6 317.6 V328 M1229.6 317.6 H1231.6" fill="none" stroke="#d4d4d4" stroke-width="1.3"/><path d="M1226 317.6 C1223.4 317.6 1223.4 322.4 1226 322.4 H1227.6 V317.6Z" fill="#d4d4d4"/><rect x="1225" y="336.4" width="8.6" height="8.4" fill="none" stroke="#d4d4d4" stroke-width="0.9"/><circle cx="1225.2" cy="344.2" r="2.8" fill="#535353" stroke="#d4d4d4" stroke-width="1"/><circle cx="1225.2" cy="344.2" r="1" fill="#d4d4d4"/><path d="M1225.2 340.4 V341.4 M1225.2 347 V348 M1221.4 344.2 H1222.4 M1228 344.2 H1229" stroke="#d4d4d4" stroke-width="1"/><path d="M1228 362.2 L1234 365.6 L1228 369 L1222 365.6 Z" fill="#d4d4d4"/><path d="M1222.4 369.2 L1228 372.6 L1233.6 369.2" fill="none" stroke="#d4d4d4" stroke-width="1.3"/><path d="M1223 399 L1226.6 389 L1230.2 399 M1224.4 395.6 H1228.8" fill="none" stroke="#d4d4d4" stroke-width="1.2"/><path d="M1232.6 388 V400" stroke="#d4d4d4" stroke-width="1"/><circle cx="1228" cy="417" r="2.8" fill="#d4d4d4"/><circle cx="1225" cy="420.6" r="2.8" fill="#d4d4d4"/><circle cx="1231" cy="420.6" r="2.8" fill="#d4d4d4"/><path d="M1228 419 L1229 425.2 H1231 V426.2 H1225 V425.2 H1227 Z" fill="#d4d4d4"/><circle cx="1225.8" cy="445.2" r="4.2" fill="#e0e0e0"/><circle cx="1229.8" cy="448.6" r="4.4" fill="#8c8c8c" stroke="#c4c4c4" stroke-width="0.9"/></svg>
</div></body></html>
